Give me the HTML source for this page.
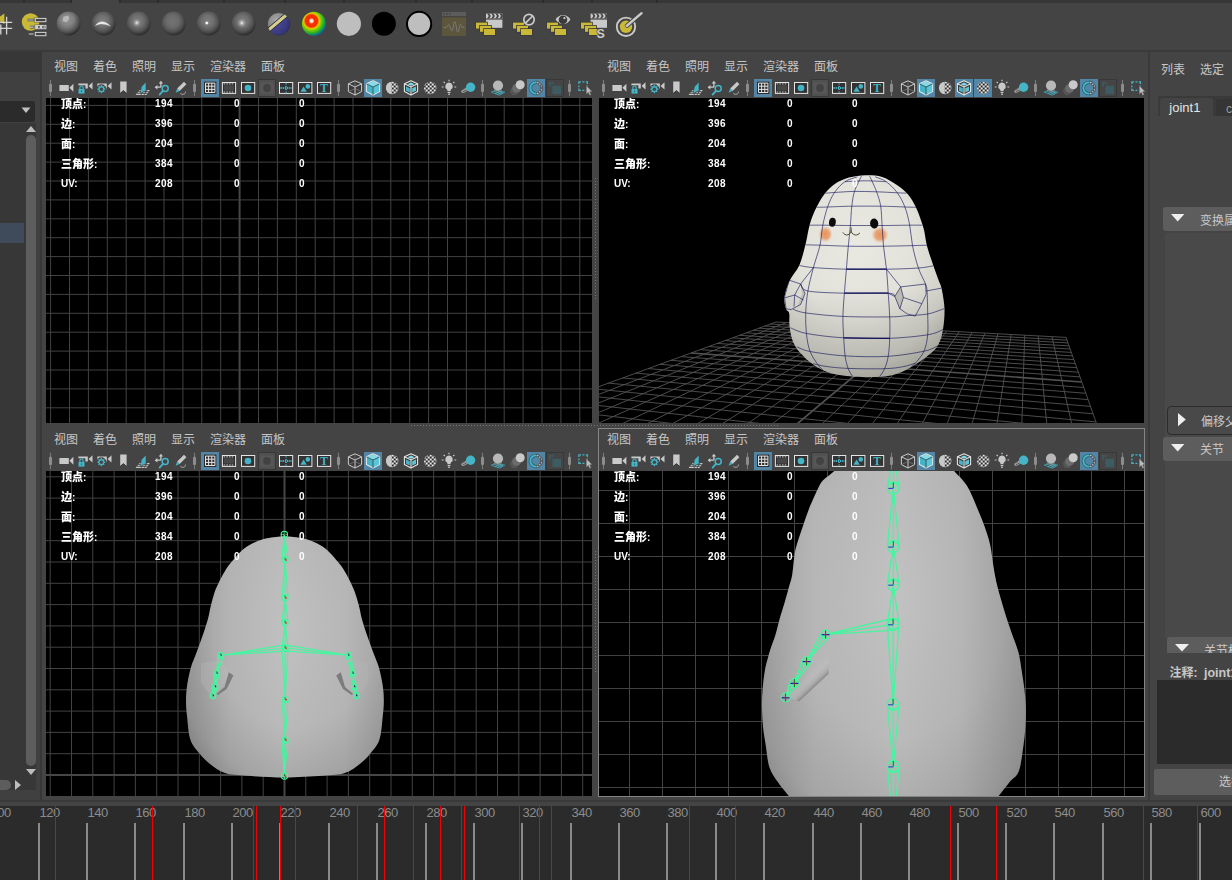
<!DOCTYPE html>
<html lang="zh"><head><meta charset="utf-8"><title>Maya</title>
<style>
*{box-sizing:border-box;margin:0;padding:0}
html,body{width:1232px;height:880px;overflow:hidden;background:#444444}
body{position:relative;font-family:"Liberation Sans","Noto Sans CJK SC",sans-serif;font-size:12px;color:#c8c8c8}
.a{position:absolute}
.menu{position:absolute;height:16px;line-height:16px;font-size:12px;color:#c6c6c6;white-space:nowrap}
.menu span{position:absolute;top:0}
.vp{position:absolute;background:#000;overflow:hidden}
svg text{white-space:pre}
.hud b{font-size:11px}
.hud{position:absolute;will-change:transform;font-weight:bold;font-size:10px;color:#fff;line-height:14px;white-space:nowrap;font-family:"Liberation Sans","Noto Sans CJK SC",sans-serif}
svg{position:absolute;overflow:visible}
</style></head><body>
<div class="a" style="left:0px;top:0px;width:1232px;height:3px;background:#373737;"></div><div class="a" style="left:72px;top:0px;width:48px;height:3px;background:#444444;"></div><div class="a" style="left:23px;top:0px;width:2px;height:3px;background:#2c2c2c;"></div><div class="a" style="left:70px;top:0px;width:2px;height:3px;background:#2c2c2c;"></div><div class="a" style="left:119px;top:0px;width:2px;height:3px;background:#2c2c2c;"></div><div class="a" style="left:157px;top:0px;width:2px;height:3px;background:#2c2c2c;"></div><div class="a" style="left:223px;top:0px;width:2px;height:3px;background:#2c2c2c;"></div><div class="a" style="left:284px;top:0px;width:2px;height:3px;background:#2c2c2c;"></div><div class="a" style="left:343px;top:0px;width:2px;height:3px;background:#2c2c2c;"></div><div class="a" style="left:415px;top:0px;width:2px;height:3px;background:#2c2c2c;"></div><div class="a" style="left:471px;top:0px;width:2px;height:3px;background:#2c2c2c;"></div><div class="a" style="left:542px;top:0px;width:2px;height:3px;background:#2c2c2c;"></div><div class="a" style="left:591px;top:0px;width:2px;height:3px;background:#2c2c2c;"></div><div class="a" style="left:656px;top:0px;width:2px;height:3px;background:#2c2c2c;"></div><div class="a" style="left:0px;top:50px;width:1232px;height:2px;background:#3a3a3a;"></div><svg style="left:0;top:0" width="700" height="50" viewBox="0 0 700 50"><defs>
<radialGradient id="sg" cx="0.45" cy="0.40" r="0.60"><stop offset="0" stop-color="#7e7e7e"/><stop offset="0.4" stop-color="#707070"/><stop offset="0.7" stop-color="#555555"/><stop offset="0.9" stop-color="#3a3a3a"/><stop offset="1" stop-color="#2a2a2a"/></radialGradient>
<radialGradient id="sg2" cx="0.45" cy="0.40" r="0.60"><stop offset="0" stop-color="#747474"/><stop offset="0.45" stop-color="#6a6a6a"/><stop offset="0.72" stop-color="#535353"/><stop offset="0.9" stop-color="#3a3a3a"/><stop offset="1" stop-color="#2a2a2a"/></radialGradient>
<radialGradient id="sg1" cx="0.42" cy="0.36" r="0.64"><stop offset="0" stop-color="#949494"/><stop offset="0.45" stop-color="#7c7c7c"/><stop offset="0.75" stop-color="#585858"/><stop offset="0.92" stop-color="#3a3a3a"/><stop offset="1" stop-color="#2a2a2a"/></radialGradient><radialGradient id="hl1" cx="0.5" cy="0.5" r="0.5"><stop offset="0" stop-color="#ffffff"/><stop offset="0.35" stop-color="#e0e0e0" stop-opacity="0.9"/><stop offset="1" stop-color="#808080" stop-opacity="0"/></radialGradient>
<radialGradient id="hl2" cx="0.5" cy="0.5" r="0.5"><stop offset="0" stop-color="#ffffff"/><stop offset="0.2" stop-color="#d8d8d8" stop-opacity="0.8"/><stop offset="1" stop-color="#808080" stop-opacity="0"/></radialGradient>
<radialGradient id="rb" cx="0.40" cy="0.38" r="0.70"><stop offset="0" stop-color="#ffffff"/><stop offset="0.10" stop-color="#ffd0c0"/><stop offset="0.18" stop-color="#ff2a00"/><stop offset="0.36" stop-color="#f03000"/><stop offset="0.46" stop-color="#e8c800"/><stop offset="0.56" stop-color="#7ed000"/><stop offset="0.75" stop-color="#20a830"/><stop offset="0.9" stop-color="#0868a0"/><stop offset="1" stop-color="#0838a8"/></radialGradient>
<radialGradient id="bl" cx="0.35" cy="0.3" r="0.8"><stop offset="0" stop-color="#5454a6"/><stop offset="0.6" stop-color="#38387c"/><stop offset="1" stop-color="#1c1c48"/></radialGradient>
<radialGradient id="gr" cx="0.4" cy="0.35" r="0.8"><stop offset="0" stop-color="#a8a8a8"/><stop offset="1" stop-color="#5a5a5a"/></radialGradient>
<clipPath id="c9"><circle cx="278.8" cy="24" r="11.4"/></clipPath>
</defs><path d="M4.4 13.6V24.2L-3.5 19z" fill="#c9b936"/><path d="M0.8 24.5V34.5M6.6 16.8V34.5M0 22.4H12.2M0 28.4H12.2" stroke="#d4d4d4" stroke-width="1.3" fill="none"/><circle cx="30.6" cy="22" r="8.8" fill="#c9b936"/><path d="M27.5 20H34M30 27.1H34M28.8 34H34" stroke="#444" stroke-width="2.6" fill="none"/><path d="M27.5 20H33.6M30 27.1H33.6M28.8 34H33.6" stroke="#d4d4d4" stroke-width="1.2" fill="none"/><rect x="34.4" y="17.6" width="12.4" height="4.9" fill="#444"/><rect x="35.3" y="18.4" width="10.6" height="3.3" fill="#444" stroke="#d4d4d4" stroke-width="1"/><rect x="34.4" y="24.6" width="12.4" height="4.9" fill="#444"/><rect x="35.3" y="25.4" width="10.6" height="3.3" fill="#444" stroke="#d4d4d4" stroke-width="1"/><rect x="34.4" y="31.6" width="12.4" height="4.9" fill="#444"/><rect x="35.3" y="32.4" width="10.6" height="3.3" fill="#444" stroke="#d4d4d4" stroke-width="1"/><rect x="36" y="25.6" width="2.2" height="2.8" fill="#d4d4d4"/><circle cx="41" cy="27" r="1.5" fill="#d4d4d4"/><rect x="43.4" y="25.6" width="2" height="2.8" fill="#9a9a9a"/><circle cx="68.6" cy="23.5" r="11.9" fill="url(#sg1)"/><circle cx="103.75" cy="23.5" r="11.9" fill="url(#sg)"/><circle cx="138.75" cy="23.5" r="11.9" fill="url(#sg)"/><circle cx="173.75" cy="23.5" r="11.9" fill="url(#sg2)"/><circle cx="208.75" cy="23.5" r="11.9" fill="url(#sg)"/><circle cx="243.75" cy="23.5" r="11.9" fill="url(#sg)"/><path d="M63.4 16.8L68.2 15.6L69.4 18.6L66.6 22.2L62.6 21.2z" fill="#d0d0d0" opacity="0.85"/><ellipse cx="67.5" cy="19.5" rx="8" ry="6" fill="#909090" opacity="0.25"/><path d="M95.5 25.5C99 20.5 105 20.5 110.2 26C105 23.4 99.4 23.2 95.5 25.5z" fill="#f0f0f0" stroke="#d0d0d0" stroke-width="0.5"/><circle cx="136.8" cy="22.8" r="4.6" fill="url(#hl2)"/><circle cx="206.8" cy="23" r="2.6" fill="url(#hl1)"/><circle cx="206.8" cy="23" r="1.1" fill="#fff"/><circle cx="241.8" cy="23" r="5.2" fill="url(#hl2)"/><g clip-path="url(#c9)"><rect x="266" y="11" width="26" height="26" fill="url(#gr)"/><path d="M262.8 37.4L294.1 11V42H260z" fill="url(#bl)"/><path d="M260.3 34.4L291.6 8L294.1 11L262.8 37.4z" fill="#d2ce8c" stroke="#20203a" stroke-width="0.9"/></g><circle cx="278.8" cy="24" r="11.4" fill="none" stroke="#2c2c34" stroke-width="0.8" opacity="0.7"/><circle cx="313.9" cy="23.8" r="12" fill="url(#rb)"/><circle cx="348.9" cy="23.8" r="12.1" fill="#bebebe"/><circle cx="383.9" cy="23.8" r="12" fill="#000"/><circle cx="419.1" cy="23.9" r="12.1" fill="#bebebe" stroke="#000" stroke-width="2"/><rect x="442" y="12" width="24" height="4" fill="#5c5c5c"/><path d="M443.4 14H451" stroke="#444" stroke-width="1.4" stroke-dasharray="1.6 1.2"/><rect x="442" y="17.4" width="24" height="18.6" fill="#5c573c"/><path d="M443.6 27.4H446.4C447.6 27.4 447.6 24.8 448.8 24.8S450.6 30.8 452 30.8 453.4 21.6 454.8 21.6 456.4 32 457.8 32 459.2 24.4 460.4 24.4 461.6 27.4 462.6 27.4H464.6" fill="none" stroke="#7a7a7a" stroke-width="1"/><rect x="486" y="19.6" width="16.4" height="8.2" fill="#c9c9c9"/><rect x="486" y="13.6" width="16.4" height="4.8" fill="#c9c9c9"/><path d="M487.2 13.6h2l1.6 2.4l-1.6 2.4h-2l1.6-2.4z" fill="#444"/><path d="M491.3 13.6h2l1.6 2.4l-1.6 2.4h-2l1.6-2.4z" fill="#444"/><path d="M495.4 13.6h2l1.6 2.4l-1.6 2.4h-2l1.6-2.4z" fill="#444"/><path d="M499.5 13.6h2l1.6 2.4l-1.6 2.4h-2l1.6-2.4z" fill="#444"/><rect x="475.2" y="21.8" width="12.6" height="7.6" fill="#3a3a3a"/><rect x="476" y="22.6" width="11" height="6" fill="#c9b936"/><rect x="479.2" y="25.0" width="12.6" height="7.6" fill="#3a3a3a"/><rect x="480" y="25.8" width="11" height="6" fill="#c9b936"/><rect x="483.2" y="28.2" width="12.6" height="7.6" fill="#3a3a3a"/><rect x="484" y="29.0" width="11" height="6" fill="#c9b936"/><rect x="512.2" y="21.8" width="12.6" height="7.6" fill="#3a3a3a"/><rect x="513" y="22.6" width="11" height="6" fill="#c9b936"/><rect x="516.2" y="25.0" width="12.6" height="7.6" fill="#3a3a3a"/><rect x="517" y="25.8" width="11" height="6" fill="#c9b936"/><rect x="520.2" y="28.2" width="12.6" height="7.6" fill="#3a3a3a"/><rect x="521" y="29.0" width="11" height="6" fill="#c9b936"/><circle cx="529" cy="19.6" r="5.2" fill="#444" stroke="#c9c9c9" stroke-width="1.7"/><path d="M525.4 23.2L532.6 16" stroke="#c9c9c9" stroke-width="1.7"/><path d="M555.6 19.6C559 13.6 567 13.6 570.4 19.6C567 25.6 559 25.6 555.6 19.6z" fill="#c9c9c9"/><circle cx="563" cy="19.8" r="4.3" fill="#3a3a3a"/><circle cx="564.4" cy="18.2" r="1.1" fill="#c9c9c9"/><rect x="546.2" y="21.8" width="12.6" height="7.6" fill="#3a3a3a"/><rect x="547" y="22.6" width="11" height="6" fill="#c9b936"/><rect x="550.2" y="25.0" width="12.6" height="7.6" fill="#3a3a3a"/><rect x="551" y="25.8" width="11" height="6" fill="#c9b936"/><rect x="554.2" y="28.2" width="12.6" height="7.6" fill="#3a3a3a"/><rect x="555" y="29.0" width="11" height="6" fill="#c9b936"/><rect x="590.6" y="19.6" width="16.4" height="8.2" fill="#c9c9c9"/><rect x="590.6" y="13.6" width="16.4" height="4.8" fill="#c9c9c9"/><path d="M591.8000000000001 13.6h2l1.6 2.4l-1.6 2.4h-2l1.6-2.4z" fill="#444"/><path d="M595.9000000000001 13.6h2l1.6 2.4l-1.6 2.4h-2l1.6-2.4z" fill="#444"/><path d="M600.0000000000001 13.6h2l1.6 2.4l-1.6 2.4h-2l1.6-2.4z" fill="#444"/><path d="M604.1 13.6h2l1.6 2.4l-1.6 2.4h-2l1.6-2.4z" fill="#444"/><rect x="580.2" y="21.8" width="12.6" height="7.6" fill="#3a3a3a"/><rect x="581" y="22.6" width="11" height="6" fill="#c9b936"/><rect x="584.2" y="25.0" width="12.6" height="7.6" fill="#3a3a3a"/><rect x="585" y="25.8" width="11" height="6" fill="#c9b936"/><rect x="588.2" y="28.2" width="12.6" height="7.6" fill="#3a3a3a"/><rect x="589" y="29.0" width="11" height="6" fill="#c9b936"/><text x="596.4" y="37.6" font-family="Liberation Sans,sans-serif" font-weight="bold" font-size="12.5" fill="#c9c9c9" stroke="#444" stroke-width="1.4" paint-order="stroke">S</text><circle cx="626" cy="26.8" r="9.2" fill="#444" stroke="#c9c9c9" stroke-width="1.9"/><circle cx="626" cy="26.8" r="6.2" fill="#c9b936"/><path d="M627 25.6L641.6 13.2" stroke="#444" stroke-width="4.4" stroke-linecap="round"/><path d="M626.6 26L641.6 13.2" stroke="#c9c9c9" stroke-width="2.4" stroke-linecap="round"/></svg><div class="a" style="left:0px;top:52px;width:42px;height:748px;background:#373737;"></div><div class="a" style="left:0px;top:72px;width:40px;height:728px;background:#404040;"></div><div class="a" style="left:0px;top:101px;width:35px;height:21px;background:#2b2b2b;border-radius:0 3px 3px 0"></div><svg style="left:21px;top:106.5px" width="10" height="7"><path d="M0.5 0.5h9L5 6z" fill="#c0c0c0"/></svg><div class="a" style="left:0px;top:123px;width:36px;height:667px;background:#373737;"></div><div class="a" style="left:0px;top:223px;width:24px;height:20px;background:#3f4b5b;"></div><svg style="left:26px;top:126px" width="10" height="6"><path d="M0 6L5 0L10 6z" fill="#bdbdbd"/></svg><div class="a" style="left:26px;top:135px;width:10px;height:631px;background:#5d5d5d;border-radius:5px"></div><svg style="left:26px;top:769px" width="10" height="6"><path d="M0 0L5 6L10 0z" fill="#bdbdbd"/></svg><div class="a" style="left:0px;top:780px;width:11px;height:10px;background:#5d5d5d;border-radius:0 5px 5px 0"></div><svg style="left:15px;top:780px" width="6" height="10"><path d="M0 0L6 5L0 10z" fill="#bdbdbd"/></svg><div class="menu" style="left:46px;top:59px"><span style="left:8px">视图</span><span style="left:47px">着色</span><span style="left:86px">照明</span><span style="left:125px">显示</span><span style="left:164px">渲染器</span><span style="left:215px">面板</span></div><svg style="left:42.0px;top:79px" width="18" height="18" viewBox="0 0 18 18"><rect x="8" y="0.8" width="1" height="16.4" fill="#7c7c7c"/><rect x="7" y="4.8" width="3" height="8.2" rx="1" fill="#8c8c8c"/></svg><svg style="left:56.5px;top:79px" width="18" height="18" viewBox="0 0 18 18"><rect x="2.4" y="6" width="9.4" height="6" fill="#c9c9c9"/><path d="M12.4 8.7L16.4 4.7V12.7z" fill="#c9c9c9"/></svg><svg style="left:75.5px;top:79px" width="18" height="18" viewBox="0 0 18 18"><rect x="2.4" y="4.5" width="9.4" height="5" fill="#c9c9c9"/><path d="M12.6 7L16.5 3.2V10.6z" fill="#c9c9c9"/><rect x="1.6" y="6.3" width="7.8" height="9" fill="#444"/><path d="M3.9 10.2V8.6a1.6 1.6 0 0 1 3.2 0V10.2" fill="none" stroke="#44b4c6" stroke-width="1.2"/><rect x="2.5" y="10" width="6" height="4.6" fill="#44b4c6"/><rect x="5" y="11.4" width="1" height="1.8" fill="#2a6a78"/></svg><svg style="left:94.5px;top:79px" width="18" height="18" viewBox="0 0 18 18"><rect x="2.4" y="4.5" width="9.4" height="5" fill="#c9c9c9"/><path d="M12.6 7L16.5 3.2V10.6z" fill="#c9c9c9"/><circle cx="6.4" cy="10.2" r="5" fill="#444"/><path d="M10.48 9.80L10.48 10.60L9.27 11.07L9.05 11.61L9.57 12.80L9.00 13.37L7.81 12.85L7.27 13.07L6.80 14.28L6.00 14.28L5.53 13.07L4.99 12.85L3.80 13.37L3.23 12.80L3.75 11.61L3.53 11.07L2.32 10.60L2.32 9.80L3.53 9.33L3.75 8.79L3.23 7.60L3.80 7.03L4.99 7.55L5.53 7.33L6.00 6.12L6.80 6.12L7.27 7.33L7.81 7.55L9.00 7.03L9.57 7.60L9.05 8.79L9.27 9.33z" fill="#44b4c6"/><circle cx="6.4" cy="10.2" r="1.7" fill="#444"/></svg><svg style="left:113.5px;top:79px" width="18" height="18" viewBox="0 0 18 18"><path d="M6.2 2.6H12.6V14L9.4 11.2L6.2 14z" fill="#c9c9c9"/><path d="M6.2 14.6L9.4 11.8L12.6 14.6" fill="none" stroke="#333" stroke-width="0.8"/></svg><svg style="left:132.5px;top:79px" width="18" height="18" viewBox="0 0 18 18"><path d="M2.6 15.9H13.4L16.8 11H6.6z" fill="#c9c9c9"/><path d="M5.2 12.6H15.6M4 14.3H14.4M8 15.9L11 11M11 15.9L14 11" stroke="#444" stroke-width="0.9" fill="none"/><path d="M8.4 7.8L13 3V11.6L7.2 14.4z" fill="#44b4c6" stroke="#444" stroke-width="0.6"/></svg><svg style="left:151.5px;top:79px" width="18" height="18" viewBox="0 0 18 18"><path d="M8.9 8.2V3.4M8.9 8.2H4.2" stroke="#c9c9c9" stroke-width="1.3" fill="none"/><path d="M6.7 4.6L8.9 1.8L11.1 4.6zM5.4 6L2.6 8.2L5.4 10.4z" fill="#c9c9c9"/><circle cx="13.2" cy="9.6" r="3" fill="none" stroke="#44b4c6" stroke-width="1.5"/><path d="M11 11.8L7.6 15.6" stroke="#44b4c6" stroke-width="1.8" stroke-linecap="round"/></svg><svg style="left:170.5px;top:79px" width="18" height="18" viewBox="0 0 18 18"><path d="M13 2.8L15.4 5.2L8.6 12L6.2 9.6z" fill="#c9c9c9"/><path d="M6.2 9.6L8.6 12L4.6 13.8z" fill="#44b4c6"/><path d="M9.4 14.4C11 16 14.6 15.6 14.4 12.6" fill="none" stroke="#b0b0b0" stroke-width="1"/></svg><svg style="left:185.5px;top:79px" width="18" height="18" viewBox="0 0 18 18"><rect x="8" y="0.8" width="1" height="16.4" fill="#7c7c7c"/><rect x="7" y="4.8" width="3" height="8.2" rx="1" fill="#8c8c8c"/></svg><div class="a" style="left:201.0px;top:79px;width:18px;height:18px;background:#5285a6"></div><svg style="left:201.0px;top:79px" width="18" height="18" viewBox="0 0 18 18"><rect x="3" y="2.6" width="12.4" height="12.4" fill="#2d2d2d"/><path d="M4.5 4.1H13.9V13.5H4.5zM7.6 4.1V13.5M10.8 4.1V13.5M4.5 7.2H13.9M4.5 10.4H13.9" fill="none" stroke="#e4e4e4" stroke-width="1"/></svg><svg style="left:220.0px;top:79px" width="18" height="18" viewBox="0 0 18 18"><rect x="2.4" y="3.5" width="13.2" height="10.9" fill="#2d2d2d" stroke="#e4e4e4" stroke-width="1"/><rect x="4" y="6.2" width="10" height="5.4" fill="#484848"/><path d="M3.6 4.9H14.4M3.6 13H14.4" stroke="#e4e4e4" stroke-width="0.9" stroke-dasharray="1.6 1.1"/></svg><svg style="left:239.0px;top:79px" width="18" height="18" viewBox="0 0 18 18"><rect x="2.5" y="3.5" width="13.2" height="10.9" fill="#333" stroke="#e4e4e4" stroke-width="1"/><circle cx="9" cy="9" r="3.3" fill="#44b4c6"/></svg><svg style="left:258.0px;top:79px" width="18" height="18" viewBox="0 0 18 18"><rect x="0.5" y="0.5" width="17" height="17" fill="#505050" stroke="#383838"/><rect x="2.5" y="3.5" width="13" height="11" fill="#575757"/><circle cx="9" cy="9" r="3.9" fill="#424242"/></svg><svg style="left:277.0px;top:79px" width="18" height="18" viewBox="0 0 18 18"><rect x="2.5" y="3.5" width="13.2" height="10.9" fill="#333" stroke="#e4e4e4" stroke-width="1"/><path d="M3.4 9H14.8" stroke="#44b4c6" stroke-width="1.8" stroke-dasharray="1.3 0.9"/><path d="M9.1 4.4V13.6" stroke="#44b4c6" stroke-width="1.6" stroke-dasharray="1.2 1.5"/></svg><svg style="left:296.0px;top:79px" width="18" height="18" viewBox="0 0 18 18"><rect x="2.5" y="3.5" width="13.4" height="10.9" fill="#333" stroke="#e4e4e4" stroke-width="1"/><path d="M4.4 12.8L7.6 7.6L10.8 12.8z" fill="#44b4c6"/><circle cx="11.8" cy="7.4" r="2.3" fill="#44b4c6"/></svg><svg style="left:315.0px;top:79px" width="18" height="18" viewBox="0 0 18 18"><rect x="2.5" y="3.5" width="13.2" height="10.9" fill="#333" stroke="#e4e4e4" stroke-width="1"/><text x="9.1" y="13.2" text-anchor="middle" font-family="Liberation Serif,serif" font-weight="bold" font-size="11.5" fill="#44b4c6">T</text></svg><svg style="left:329.5px;top:79px" width="18" height="18" viewBox="0 0 18 18"><rect x="8" y="0.8" width="1" height="16.4" fill="#7c7c7c"/><rect x="7" y="4.8" width="3" height="8.2" rx="1" fill="#8c8c8c"/></svg><svg style="left:345.5px;top:79px" width="18" height="18" viewBox="0 0 18 18"><path d="M9 1.8L15.6 4.8V12.6L9 16L2.4 12.6V4.8z" fill="#3a3a3a" stroke="#d4d4d4" stroke-width="0.95" stroke-linejoin="round"/><path d="M2.4 4.8L9 8L15.6 4.8M9 8V16" fill="none" stroke="#d4d4d4" stroke-width="0.95"/><path d="M9 1.8V9.6M9 9.6L2.4 12.6M9 9.6L15.6 12.6" fill="none" stroke="#8a8a8a" stroke-width="0.6"/></svg><div class="a" style="left:364.0px;top:79px;width:18px;height:18px;background:#5285a6"></div><svg style="left:364.0px;top:79px" width="18" height="18" viewBox="0 0 18 18"><path d="M9 1.8L15.6 4.8V12.6L9 16L2.4 12.6V4.8z" fill="#44b4c6" stroke="#e4e4e4" stroke-width="1.1" stroke-linejoin="round"/><path d="M9 2.4L15 5L9 7.8L3 5z" fill="#86dbe8"/><path d="M9.4 8.4L15.1 5.8V12.2L9.4 15.2z" fill="#5cc6d6"/><path d="M2.4 4.8L9 8L15.6 4.8M9 8V16" fill="none" stroke="#2d3c40" stroke-width="0.7"/></svg><svg style="left:383.0px;top:79px" width="18" height="18" viewBox="0 0 18 18"><clipPath id="ckA1"><circle cx="9.2" cy="9" r="6.2"/></clipPath><g clip-path="url(#ckA1)"><rect x="0" y="0" width="18" height="18" fill="#e8e8e8"/><path d="M0.70 0.50h2.0v2.0h-2.0zM0.70 4.50h2.0v2.0h-2.0zM0.70 8.50h2.0v2.0h-2.0zM0.70 12.50h2.0v2.0h-2.0zM0.70 16.50h2.0v2.0h-2.0zM0.70 20.50h2.0v2.0h-2.0zM0.70 24.50h2.0v2.0h-2.0zM2.70 2.50h2.0v2.0h-2.0zM2.70 6.50h2.0v2.0h-2.0zM2.70 10.50h2.0v2.0h-2.0zM2.70 14.50h2.0v2.0h-2.0zM2.70 18.50h2.0v2.0h-2.0zM2.70 22.50h2.0v2.0h-2.0zM2.70 26.50h2.0v2.0h-2.0zM4.70 0.50h2.0v2.0h-2.0zM4.70 4.50h2.0v2.0h-2.0zM4.70 8.50h2.0v2.0h-2.0zM4.70 12.50h2.0v2.0h-2.0zM4.70 16.50h2.0v2.0h-2.0zM4.70 20.50h2.0v2.0h-2.0zM4.70 24.50h2.0v2.0h-2.0zM6.70 2.50h2.0v2.0h-2.0zM6.70 6.50h2.0v2.0h-2.0zM6.70 10.50h2.0v2.0h-2.0zM6.70 14.50h2.0v2.0h-2.0zM6.70 18.50h2.0v2.0h-2.0zM6.70 22.50h2.0v2.0h-2.0zM6.70 26.50h2.0v2.0h-2.0zM8.70 0.50h2.0v2.0h-2.0zM8.70 4.50h2.0v2.0h-2.0zM8.70 8.50h2.0v2.0h-2.0zM8.70 12.50h2.0v2.0h-2.0zM8.70 16.50h2.0v2.0h-2.0zM8.70 20.50h2.0v2.0h-2.0zM8.70 24.50h2.0v2.0h-2.0zM10.70 2.50h2.0v2.0h-2.0zM10.70 6.50h2.0v2.0h-2.0zM10.70 10.50h2.0v2.0h-2.0zM10.70 14.50h2.0v2.0h-2.0zM10.70 18.50h2.0v2.0h-2.0zM10.70 22.50h2.0v2.0h-2.0zM10.70 26.50h2.0v2.0h-2.0zM12.70 0.50h2.0v2.0h-2.0zM12.70 4.50h2.0v2.0h-2.0zM12.70 8.50h2.0v2.0h-2.0zM12.70 12.50h2.0v2.0h-2.0zM12.70 16.50h2.0v2.0h-2.0zM12.70 20.50h2.0v2.0h-2.0zM12.70 24.50h2.0v2.0h-2.0zM14.70 2.50h2.0v2.0h-2.0zM14.70 6.50h2.0v2.0h-2.0zM14.70 10.50h2.0v2.0h-2.0zM14.70 14.50h2.0v2.0h-2.0zM14.70 18.50h2.0v2.0h-2.0zM14.70 22.50h2.0v2.0h-2.0zM14.70 26.50h2.0v2.0h-2.0zM16.70 0.50h2.0v2.0h-2.0zM16.70 4.50h2.0v2.0h-2.0zM16.70 8.50h2.0v2.0h-2.0zM16.70 12.50h2.0v2.0h-2.0zM16.70 16.50h2.0v2.0h-2.0zM16.70 20.50h2.0v2.0h-2.0zM16.70 24.50h2.0v2.0h-2.0zM18.70 2.50h2.0v2.0h-2.0zM18.70 6.50h2.0v2.0h-2.0zM18.70 10.50h2.0v2.0h-2.0zM18.70 14.50h2.0v2.0h-2.0zM18.70 18.50h2.0v2.0h-2.0zM18.70 22.50h2.0v2.0h-2.0zM18.70 26.50h2.0v2.0h-2.0zM20.70 0.50h2.0v2.0h-2.0zM20.70 4.50h2.0v2.0h-2.0zM20.70 8.50h2.0v2.0h-2.0zM20.70 12.50h2.0v2.0h-2.0zM20.70 16.50h2.0v2.0h-2.0zM20.70 20.50h2.0v2.0h-2.0zM20.70 24.50h2.0v2.0h-2.0zM22.70 2.50h2.0v2.0h-2.0zM22.70 6.50h2.0v2.0h-2.0zM22.70 10.50h2.0v2.0h-2.0zM22.70 14.50h2.0v2.0h-2.0zM22.70 18.50h2.0v2.0h-2.0zM22.70 22.50h2.0v2.0h-2.0zM22.70 26.50h2.0v2.0h-2.0zM24.70 0.50h2.0v2.0h-2.0zM24.70 4.50h2.0v2.0h-2.0zM24.70 8.50h2.0v2.0h-2.0zM24.70 12.50h2.0v2.0h-2.0zM24.70 16.50h2.0v2.0h-2.0zM24.70 20.50h2.0v2.0h-2.0zM24.70 24.50h2.0v2.0h-2.0zM26.70 2.50h2.0v2.0h-2.0zM26.70 6.50h2.0v2.0h-2.0zM26.70 10.50h2.0v2.0h-2.0zM26.70 14.50h2.0v2.0h-2.0zM26.70 18.50h2.0v2.0h-2.0zM26.70 22.50h2.0v2.0h-2.0zM26.70 26.50h2.0v2.0h-2.0z" fill="#2b2b2b"/><rect x="0" y="0" width="8.6" height="18" fill="#c9c9c9"/></g></svg><svg style="left:402.0px;top:79px" width="18" height="18" viewBox="0 0 18 18"><path d="M9 1.8L15.6 4.8V12.6L9 16L2.4 12.6V4.8z" fill="#3a3a3a" stroke="#e4e4e4" stroke-width="1.1" stroke-linejoin="round"/><path d="M2.4 4.8L9 8L15.6 4.8M9 8V16" fill="none" stroke="#e4e4e4" stroke-width="1.1"/><path d="M9 3.6L12.6 5.2L9 6.8L5.4 5.2z" fill="#7fd8e6"/><path d="M4 7.4L7.8 9.2V13.6L4 11.8z" fill="#44b4c6"/><path d="M14 7.4L10.2 9.2V13.6L14 11.8z" fill="#5cc6d6"/></svg><svg style="left:421.0px;top:79px" width="18" height="18" viewBox="0 0 18 18"><clipPath id="ckB2"><circle cx="9.2" cy="9" r="6.2"/></clipPath><g clip-path="url(#ckB2)"><rect x="0" y="0" width="18" height="18" fill="#e8e8e8"/><path d="M0.70 0.50h2.0v2.0h-2.0zM0.70 4.50h2.0v2.0h-2.0zM0.70 8.50h2.0v2.0h-2.0zM0.70 12.50h2.0v2.0h-2.0zM0.70 16.50h2.0v2.0h-2.0zM0.70 20.50h2.0v2.0h-2.0zM0.70 24.50h2.0v2.0h-2.0zM2.70 2.50h2.0v2.0h-2.0zM2.70 6.50h2.0v2.0h-2.0zM2.70 10.50h2.0v2.0h-2.0zM2.70 14.50h2.0v2.0h-2.0zM2.70 18.50h2.0v2.0h-2.0zM2.70 22.50h2.0v2.0h-2.0zM2.70 26.50h2.0v2.0h-2.0zM4.70 0.50h2.0v2.0h-2.0zM4.70 4.50h2.0v2.0h-2.0zM4.70 8.50h2.0v2.0h-2.0zM4.70 12.50h2.0v2.0h-2.0zM4.70 16.50h2.0v2.0h-2.0zM4.70 20.50h2.0v2.0h-2.0zM4.70 24.50h2.0v2.0h-2.0zM6.70 2.50h2.0v2.0h-2.0zM6.70 6.50h2.0v2.0h-2.0zM6.70 10.50h2.0v2.0h-2.0zM6.70 14.50h2.0v2.0h-2.0zM6.70 18.50h2.0v2.0h-2.0zM6.70 22.50h2.0v2.0h-2.0zM6.70 26.50h2.0v2.0h-2.0zM8.70 0.50h2.0v2.0h-2.0zM8.70 4.50h2.0v2.0h-2.0zM8.70 8.50h2.0v2.0h-2.0zM8.70 12.50h2.0v2.0h-2.0zM8.70 16.50h2.0v2.0h-2.0zM8.70 20.50h2.0v2.0h-2.0zM8.70 24.50h2.0v2.0h-2.0zM10.70 2.50h2.0v2.0h-2.0zM10.70 6.50h2.0v2.0h-2.0zM10.70 10.50h2.0v2.0h-2.0zM10.70 14.50h2.0v2.0h-2.0zM10.70 18.50h2.0v2.0h-2.0zM10.70 22.50h2.0v2.0h-2.0zM10.70 26.50h2.0v2.0h-2.0zM12.70 0.50h2.0v2.0h-2.0zM12.70 4.50h2.0v2.0h-2.0zM12.70 8.50h2.0v2.0h-2.0zM12.70 12.50h2.0v2.0h-2.0zM12.70 16.50h2.0v2.0h-2.0zM12.70 20.50h2.0v2.0h-2.0zM12.70 24.50h2.0v2.0h-2.0zM14.70 2.50h2.0v2.0h-2.0zM14.70 6.50h2.0v2.0h-2.0zM14.70 10.50h2.0v2.0h-2.0zM14.70 14.50h2.0v2.0h-2.0zM14.70 18.50h2.0v2.0h-2.0zM14.70 22.50h2.0v2.0h-2.0zM14.70 26.50h2.0v2.0h-2.0zM16.70 0.50h2.0v2.0h-2.0zM16.70 4.50h2.0v2.0h-2.0zM16.70 8.50h2.0v2.0h-2.0zM16.70 12.50h2.0v2.0h-2.0zM16.70 16.50h2.0v2.0h-2.0zM16.70 20.50h2.0v2.0h-2.0zM16.70 24.50h2.0v2.0h-2.0zM18.70 2.50h2.0v2.0h-2.0zM18.70 6.50h2.0v2.0h-2.0zM18.70 10.50h2.0v2.0h-2.0zM18.70 14.50h2.0v2.0h-2.0zM18.70 18.50h2.0v2.0h-2.0zM18.70 22.50h2.0v2.0h-2.0zM18.70 26.50h2.0v2.0h-2.0zM20.70 0.50h2.0v2.0h-2.0zM20.70 4.50h2.0v2.0h-2.0zM20.70 8.50h2.0v2.0h-2.0zM20.70 12.50h2.0v2.0h-2.0zM20.70 16.50h2.0v2.0h-2.0zM20.70 20.50h2.0v2.0h-2.0zM20.70 24.50h2.0v2.0h-2.0zM22.70 2.50h2.0v2.0h-2.0zM22.70 6.50h2.0v2.0h-2.0zM22.70 10.50h2.0v2.0h-2.0zM22.70 14.50h2.0v2.0h-2.0zM22.70 18.50h2.0v2.0h-2.0zM22.70 22.50h2.0v2.0h-2.0zM22.70 26.50h2.0v2.0h-2.0zM24.70 0.50h2.0v2.0h-2.0zM24.70 4.50h2.0v2.0h-2.0zM24.70 8.50h2.0v2.0h-2.0zM24.70 12.50h2.0v2.0h-2.0zM24.70 16.50h2.0v2.0h-2.0zM24.70 20.50h2.0v2.0h-2.0zM24.70 24.50h2.0v2.0h-2.0zM26.70 2.50h2.0v2.0h-2.0zM26.70 6.50h2.0v2.0h-2.0zM26.70 10.50h2.0v2.0h-2.0zM26.70 14.50h2.0v2.0h-2.0zM26.70 18.50h2.0v2.0h-2.0zM26.70 22.50h2.0v2.0h-2.0zM26.70 26.50h2.0v2.0h-2.0z" fill="#2b2b2b"/></g></svg><svg style="left:440.0px;top:79px" width="18" height="18" viewBox="0 0 18 18"><path d="M9 3.6a3.7 3.7 0 0 1 2.2 6.7c-.5.5-.7 1-.7 1.8H7.5c0-.8-.2-1.3-.7-1.8A3.7 3.7 0 0 1 9 3.6z" fill="#c9c9c9"/><rect x="7.6" y="12.8" width="2.8" height="1.2" fill="#c9c9c9"/><rect x="8" y="14.6" width="2" height="1.2" fill="#c9c9c9"/><path d="M9 0.8V2.2M3.6 2.8L4.8 4M14.4 2.8L13.2 4M1.8 8H3.6M14.4 8H16.2" stroke="#c9c9c9" stroke-width="1.2" fill="none"/></svg><svg style="left:459.0px;top:79px" width="18" height="18" viewBox="0 0 18 18"><ellipse cx="5.6" cy="11.4" rx="3.6" ry="1.9" transform="rotate(-28 5.6 11.4)" fill="#9a9a9a"/><path d="M3 11L6 9.4M4 12.8L7.6 11" stroke="#444" stroke-width="0.7"/><circle cx="11.6" cy="8.3" r="4.7" fill="#44b4c6"/></svg><svg style="left:473.5px;top:79px" width="18" height="18" viewBox="0 0 18 18"><rect x="8" y="0.8" width="1" height="16.4" fill="#7c7c7c"/><rect x="7" y="4.8" width="3" height="8.2" rx="1" fill="#8c8c8c"/></svg><svg style="left:489.0px;top:79px" width="18" height="18" viewBox="0 0 18 18"><path d="M2.2 13.2L7 11L15.8 13.2L10.4 16.2z" fill="none" stroke="#44b4c6" stroke-width="0.7"/><path d="M4.4 12.2L12.6 15M6 14.8L12 12.2M8.4 15.6L14 12.8M7 11.2L13.8 14" stroke="#44b4c6" stroke-width="0.7"/><circle cx="9" cy="6.6" r="5.1" fill="#b8b8b8"/><path d="M6 10.6V12.6M8 11.4V13.4M10 11.4V13.4M12 10.6V12.4" stroke="#8a8a8a" stroke-width="1"/></svg><svg style="left:508.0px;top:79px" width="18" height="18" viewBox="0 0 18 18"><circle cx="6.2" cy="12" r="4.2" fill="#555"/><circle cx="8.6" cy="9.4" r="4.4" fill="#6c6c6c"/><circle cx="12.2" cy="5.8" r="4.5" fill="#c9c9c9"/></svg><div class="a" style="left:527.0px;top:79px;width:18px;height:18px;background:#5285a6"></div><svg style="left:527.0px;top:79px" width="18" height="18" viewBox="0 0 18 18"><path d="M10.4 3.6A5.6 5.6 0 1 0 10.4 14.4" fill="none" stroke="#2a5f6e" stroke-width="3.4"/><path d="M10.4 3.6A5.6 5.6 0 1 0 10.4 14.4" fill="none" stroke="#44b4c6" stroke-width="1.9"/><path d="M9.8 2.4h2v2h-2zM11.8 4.2h2v2h-2zM13.4 6.2h2v2h-2zM13.4 9.8h2v2h-2zM11.8 11.8h2v2h-2zM9.8 13.6h2v2h-2zM13.8 8h1.8v1.8h-1.8z" fill="#f0f0f0" stroke="#2d2d2d" stroke-width="0.6"/></svg><svg style="left:546.0px;top:79px" width="18" height="18" viewBox="0 0 18 18"><rect x="0.5" y="0.5" width="17" height="17" fill="#454545" stroke="#383838"/><path d="M3 3h2v2H3zM5.4 3h2v2h-2zM3 5.4h2v2H3z" fill="#3c5a60"/><rect x="6.4" y="6.8" width="8.6" height="8.4" fill="#3d5c62"/></svg><svg style="left:560.5px;top:79px" width="18" height="18" viewBox="0 0 18 18"><rect x="8" y="0.8" width="1" height="16.4" fill="#7c7c7c"/><rect x="7" y="4.8" width="3" height="8.2" rx="1" fill="#8c8c8c"/></svg><svg style="left:576.0px;top:79px" width="18" height="18" viewBox="0 0 18 18"><path d="M2.9 5V2.9H5M6.4 2.9H8.4M9.8 2.9H11.4V5M11.4 6.4V7.6M2.9 6.4V8.2M2.9 9.6V11.4H5M6.4 11.4H8.4" fill="none" stroke="#44b4c6" stroke-width="1.3"/><path d="M10.2 6.6V15.4L12.2 13.4L13.6 16.4L15.2 15.6L13.8 12.8H16.4z" fill="#bdbdbd" stroke="#444" stroke-width="0.5"/></svg><div class="menu" style="left:599px;top:59px"><span style="left:8px">视图</span><span style="left:47px">着色</span><span style="left:86px">照明</span><span style="left:125px">显示</span><span style="left:164px">渲染器</span><span style="left:215px">面板</span></div><svg style="left:595.0px;top:79px" width="18" height="18" viewBox="0 0 18 18"><rect x="8" y="0.8" width="1" height="16.4" fill="#7c7c7c"/><rect x="7" y="4.8" width="3" height="8.2" rx="1" fill="#8c8c8c"/></svg><svg style="left:609.5px;top:79px" width="18" height="18" viewBox="0 0 18 18"><rect x="2.4" y="6" width="9.4" height="6" fill="#c9c9c9"/><path d="M12.4 8.7L16.4 4.7V12.7z" fill="#c9c9c9"/></svg><svg style="left:628.5px;top:79px" width="18" height="18" viewBox="0 0 18 18"><rect x="2.4" y="4.5" width="9.4" height="5" fill="#c9c9c9"/><path d="M12.6 7L16.5 3.2V10.6z" fill="#c9c9c9"/><rect x="1.6" y="6.3" width="7.8" height="9" fill="#444"/><path d="M3.9 10.2V8.6a1.6 1.6 0 0 1 3.2 0V10.2" fill="none" stroke="#44b4c6" stroke-width="1.2"/><rect x="2.5" y="10" width="6" height="4.6" fill="#44b4c6"/><rect x="5" y="11.4" width="1" height="1.8" fill="#2a6a78"/></svg><svg style="left:647.5px;top:79px" width="18" height="18" viewBox="0 0 18 18"><rect x="2.4" y="4.5" width="9.4" height="5" fill="#c9c9c9"/><path d="M12.6 7L16.5 3.2V10.6z" fill="#c9c9c9"/><circle cx="6.4" cy="10.2" r="5" fill="#444"/><path d="M10.48 9.80L10.48 10.60L9.27 11.07L9.05 11.61L9.57 12.80L9.00 13.37L7.81 12.85L7.27 13.07L6.80 14.28L6.00 14.28L5.53 13.07L4.99 12.85L3.80 13.37L3.23 12.80L3.75 11.61L3.53 11.07L2.32 10.60L2.32 9.80L3.53 9.33L3.75 8.79L3.23 7.60L3.80 7.03L4.99 7.55L5.53 7.33L6.00 6.12L6.80 6.12L7.27 7.33L7.81 7.55L9.00 7.03L9.57 7.60L9.05 8.79L9.27 9.33z" fill="#44b4c6"/><circle cx="6.4" cy="10.2" r="1.7" fill="#444"/></svg><svg style="left:666.5px;top:79px" width="18" height="18" viewBox="0 0 18 18"><path d="M6.2 2.6H12.6V14L9.4 11.2L6.2 14z" fill="#c9c9c9"/><path d="M6.2 14.6L9.4 11.8L12.6 14.6" fill="none" stroke="#333" stroke-width="0.8"/></svg><svg style="left:685.5px;top:79px" width="18" height="18" viewBox="0 0 18 18"><path d="M2.6 15.9H13.4L16.8 11H6.6z" fill="#c9c9c9"/><path d="M5.2 12.6H15.6M4 14.3H14.4M8 15.9L11 11M11 15.9L14 11" stroke="#444" stroke-width="0.9" fill="none"/><path d="M8.4 7.8L13 3V11.6L7.2 14.4z" fill="#44b4c6" stroke="#444" stroke-width="0.6"/></svg><svg style="left:704.5px;top:79px" width="18" height="18" viewBox="0 0 18 18"><path d="M8.9 8.2V3.4M8.9 8.2H4.2" stroke="#c9c9c9" stroke-width="1.3" fill="none"/><path d="M6.7 4.6L8.9 1.8L11.1 4.6zM5.4 6L2.6 8.2L5.4 10.4z" fill="#c9c9c9"/><circle cx="13.2" cy="9.6" r="3" fill="none" stroke="#44b4c6" stroke-width="1.5"/><path d="M11 11.8L7.6 15.6" stroke="#44b4c6" stroke-width="1.8" stroke-linecap="round"/></svg><svg style="left:723.5px;top:79px" width="18" height="18" viewBox="0 0 18 18"><path d="M13 2.8L15.4 5.2L8.6 12L6.2 9.6z" fill="#c9c9c9"/><path d="M6.2 9.6L8.6 12L4.6 13.8z" fill="#44b4c6"/><path d="M9.4 14.4C11 16 14.6 15.6 14.4 12.6" fill="none" stroke="#b0b0b0" stroke-width="1"/></svg><svg style="left:738.5px;top:79px" width="18" height="18" viewBox="0 0 18 18"><rect x="8" y="0.8" width="1" height="16.4" fill="#7c7c7c"/><rect x="7" y="4.8" width="3" height="8.2" rx="1" fill="#8c8c8c"/></svg><div class="a" style="left:754.0px;top:79px;width:18px;height:18px;background:#5285a6"></div><svg style="left:754.0px;top:79px" width="18" height="18" viewBox="0 0 18 18"><rect x="3" y="2.6" width="12.4" height="12.4" fill="#2d2d2d"/><path d="M4.5 4.1H13.9V13.5H4.5zM7.6 4.1V13.5M10.8 4.1V13.5M4.5 7.2H13.9M4.5 10.4H13.9" fill="none" stroke="#e4e4e4" stroke-width="1"/></svg><svg style="left:773.0px;top:79px" width="18" height="18" viewBox="0 0 18 18"><rect x="2.4" y="3.5" width="13.2" height="10.9" fill="#2d2d2d" stroke="#e4e4e4" stroke-width="1"/><rect x="4" y="6.2" width="10" height="5.4" fill="#484848"/><path d="M3.6 4.9H14.4M3.6 13H14.4" stroke="#e4e4e4" stroke-width="0.9" stroke-dasharray="1.6 1.1"/></svg><svg style="left:792.0px;top:79px" width="18" height="18" viewBox="0 0 18 18"><rect x="2.5" y="3.5" width="13.2" height="10.9" fill="#333" stroke="#e4e4e4" stroke-width="1"/><circle cx="9" cy="9" r="3.3" fill="#44b4c6"/></svg><svg style="left:811.0px;top:79px" width="18" height="18" viewBox="0 0 18 18"><rect x="0.5" y="0.5" width="17" height="17" fill="#505050" stroke="#383838"/><rect x="2.5" y="3.5" width="13" height="11" fill="#575757"/><circle cx="9" cy="9" r="3.9" fill="#424242"/></svg><svg style="left:830.0px;top:79px" width="18" height="18" viewBox="0 0 18 18"><rect x="2.5" y="3.5" width="13.2" height="10.9" fill="#333" stroke="#e4e4e4" stroke-width="1"/><path d="M3.4 9H14.8" stroke="#44b4c6" stroke-width="1.8" stroke-dasharray="1.3 0.9"/><path d="M9.1 4.4V13.6" stroke="#44b4c6" stroke-width="1.6" stroke-dasharray="1.2 1.5"/></svg><svg style="left:849.0px;top:79px" width="18" height="18" viewBox="0 0 18 18"><rect x="2.5" y="3.5" width="13.4" height="10.9" fill="#333" stroke="#e4e4e4" stroke-width="1"/><path d="M4.4 12.8L7.6 7.6L10.8 12.8z" fill="#44b4c6"/><circle cx="11.8" cy="7.4" r="2.3" fill="#44b4c6"/></svg><svg style="left:868.0px;top:79px" width="18" height="18" viewBox="0 0 18 18"><rect x="2.5" y="3.5" width="13.2" height="10.9" fill="#333" stroke="#e4e4e4" stroke-width="1"/><text x="9.1" y="13.2" text-anchor="middle" font-family="Liberation Serif,serif" font-weight="bold" font-size="11.5" fill="#44b4c6">T</text></svg><svg style="left:882.5px;top:79px" width="18" height="18" viewBox="0 0 18 18"><rect x="8" y="0.8" width="1" height="16.4" fill="#7c7c7c"/><rect x="7" y="4.8" width="3" height="8.2" rx="1" fill="#8c8c8c"/></svg><svg style="left:898.5px;top:79px" width="18" height="18" viewBox="0 0 18 18"><path d="M9 1.8L15.6 4.8V12.6L9 16L2.4 12.6V4.8z" fill="#3a3a3a" stroke="#d4d4d4" stroke-width="0.95" stroke-linejoin="round"/><path d="M2.4 4.8L9 8L15.6 4.8M9 8V16" fill="none" stroke="#d4d4d4" stroke-width="0.95"/><path d="M9 1.8V9.6M9 9.6L2.4 12.6M9 9.6L15.6 12.6" fill="none" stroke="#8a8a8a" stroke-width="0.6"/></svg><div class="a" style="left:917.0px;top:79px;width:18px;height:18px;background:#5285a6"></div><svg style="left:917.0px;top:79px" width="18" height="18" viewBox="0 0 18 18"><path d="M9 1.8L15.6 4.8V12.6L9 16L2.4 12.6V4.8z" fill="#44b4c6" stroke="#e4e4e4" stroke-width="1.1" stroke-linejoin="round"/><path d="M9 2.4L15 5L9 7.8L3 5z" fill="#86dbe8"/><path d="M9.4 8.4L15.1 5.8V12.2L9.4 15.2z" fill="#5cc6d6"/><path d="M2.4 4.8L9 8L15.6 4.8M9 8V16" fill="none" stroke="#2d3c40" stroke-width="0.7"/></svg><svg style="left:936.0px;top:79px" width="18" height="18" viewBox="0 0 18 18"><clipPath id="ckA3"><circle cx="9.2" cy="9" r="6.2"/></clipPath><g clip-path="url(#ckA3)"><rect x="0" y="0" width="18" height="18" fill="#e8e8e8"/><path d="M0.70 0.50h2.0v2.0h-2.0zM0.70 4.50h2.0v2.0h-2.0zM0.70 8.50h2.0v2.0h-2.0zM0.70 12.50h2.0v2.0h-2.0zM0.70 16.50h2.0v2.0h-2.0zM0.70 20.50h2.0v2.0h-2.0zM0.70 24.50h2.0v2.0h-2.0zM2.70 2.50h2.0v2.0h-2.0zM2.70 6.50h2.0v2.0h-2.0zM2.70 10.50h2.0v2.0h-2.0zM2.70 14.50h2.0v2.0h-2.0zM2.70 18.50h2.0v2.0h-2.0zM2.70 22.50h2.0v2.0h-2.0zM2.70 26.50h2.0v2.0h-2.0zM4.70 0.50h2.0v2.0h-2.0zM4.70 4.50h2.0v2.0h-2.0zM4.70 8.50h2.0v2.0h-2.0zM4.70 12.50h2.0v2.0h-2.0zM4.70 16.50h2.0v2.0h-2.0zM4.70 20.50h2.0v2.0h-2.0zM4.70 24.50h2.0v2.0h-2.0zM6.70 2.50h2.0v2.0h-2.0zM6.70 6.50h2.0v2.0h-2.0zM6.70 10.50h2.0v2.0h-2.0zM6.70 14.50h2.0v2.0h-2.0zM6.70 18.50h2.0v2.0h-2.0zM6.70 22.50h2.0v2.0h-2.0zM6.70 26.50h2.0v2.0h-2.0zM8.70 0.50h2.0v2.0h-2.0zM8.70 4.50h2.0v2.0h-2.0zM8.70 8.50h2.0v2.0h-2.0zM8.70 12.50h2.0v2.0h-2.0zM8.70 16.50h2.0v2.0h-2.0zM8.70 20.50h2.0v2.0h-2.0zM8.70 24.50h2.0v2.0h-2.0zM10.70 2.50h2.0v2.0h-2.0zM10.70 6.50h2.0v2.0h-2.0zM10.70 10.50h2.0v2.0h-2.0zM10.70 14.50h2.0v2.0h-2.0zM10.70 18.50h2.0v2.0h-2.0zM10.70 22.50h2.0v2.0h-2.0zM10.70 26.50h2.0v2.0h-2.0zM12.70 0.50h2.0v2.0h-2.0zM12.70 4.50h2.0v2.0h-2.0zM12.70 8.50h2.0v2.0h-2.0zM12.70 12.50h2.0v2.0h-2.0zM12.70 16.50h2.0v2.0h-2.0zM12.70 20.50h2.0v2.0h-2.0zM12.70 24.50h2.0v2.0h-2.0zM14.70 2.50h2.0v2.0h-2.0zM14.70 6.50h2.0v2.0h-2.0zM14.70 10.50h2.0v2.0h-2.0zM14.70 14.50h2.0v2.0h-2.0zM14.70 18.50h2.0v2.0h-2.0zM14.70 22.50h2.0v2.0h-2.0zM14.70 26.50h2.0v2.0h-2.0zM16.70 0.50h2.0v2.0h-2.0zM16.70 4.50h2.0v2.0h-2.0zM16.70 8.50h2.0v2.0h-2.0zM16.70 12.50h2.0v2.0h-2.0zM16.70 16.50h2.0v2.0h-2.0zM16.70 20.50h2.0v2.0h-2.0zM16.70 24.50h2.0v2.0h-2.0zM18.70 2.50h2.0v2.0h-2.0zM18.70 6.50h2.0v2.0h-2.0zM18.70 10.50h2.0v2.0h-2.0zM18.70 14.50h2.0v2.0h-2.0zM18.70 18.50h2.0v2.0h-2.0zM18.70 22.50h2.0v2.0h-2.0zM18.70 26.50h2.0v2.0h-2.0zM20.70 0.50h2.0v2.0h-2.0zM20.70 4.50h2.0v2.0h-2.0zM20.70 8.50h2.0v2.0h-2.0zM20.70 12.50h2.0v2.0h-2.0zM20.70 16.50h2.0v2.0h-2.0zM20.70 20.50h2.0v2.0h-2.0zM20.70 24.50h2.0v2.0h-2.0zM22.70 2.50h2.0v2.0h-2.0zM22.70 6.50h2.0v2.0h-2.0zM22.70 10.50h2.0v2.0h-2.0zM22.70 14.50h2.0v2.0h-2.0zM22.70 18.50h2.0v2.0h-2.0zM22.70 22.50h2.0v2.0h-2.0zM22.70 26.50h2.0v2.0h-2.0zM24.70 0.50h2.0v2.0h-2.0zM24.70 4.50h2.0v2.0h-2.0zM24.70 8.50h2.0v2.0h-2.0zM24.70 12.50h2.0v2.0h-2.0zM24.70 16.50h2.0v2.0h-2.0zM24.70 20.50h2.0v2.0h-2.0zM24.70 24.50h2.0v2.0h-2.0zM26.70 2.50h2.0v2.0h-2.0zM26.70 6.50h2.0v2.0h-2.0zM26.70 10.50h2.0v2.0h-2.0zM26.70 14.50h2.0v2.0h-2.0zM26.70 18.50h2.0v2.0h-2.0zM26.70 22.50h2.0v2.0h-2.0zM26.70 26.50h2.0v2.0h-2.0z" fill="#2b2b2b"/><rect x="0" y="0" width="8.6" height="18" fill="#c9c9c9"/></g></svg><div class="a" style="left:955.0px;top:79px;width:18px;height:18px;background:#5285a6"></div><svg style="left:955.0px;top:79px" width="18" height="18" viewBox="0 0 18 18"><path d="M9 1.8L15.6 4.8V12.6L9 16L2.4 12.6V4.8z" fill="#3a3a3a" stroke="#e4e4e4" stroke-width="1.1" stroke-linejoin="round"/><path d="M2.4 4.8L9 8L15.6 4.8M9 8V16" fill="none" stroke="#e4e4e4" stroke-width="1.1"/><path d="M9 3.6L12.6 5.2L9 6.8L5.4 5.2z" fill="#7fd8e6"/><path d="M4 7.4L7.8 9.2V13.6L4 11.8z" fill="#44b4c6"/><path d="M14 7.4L10.2 9.2V13.6L14 11.8z" fill="#5cc6d6"/></svg><div class="a" style="left:974.0px;top:79px;width:18px;height:18px;background:#5285a6"></div><svg style="left:974.0px;top:79px" width="18" height="18" viewBox="0 0 18 18"><clipPath id="ckB4"><circle cx="9.2" cy="9" r="6.2"/></clipPath><g clip-path="url(#ckB4)"><rect x="0" y="0" width="18" height="18" fill="#e8e8e8"/><path d="M0.70 0.50h2.0v2.0h-2.0zM0.70 4.50h2.0v2.0h-2.0zM0.70 8.50h2.0v2.0h-2.0zM0.70 12.50h2.0v2.0h-2.0zM0.70 16.50h2.0v2.0h-2.0zM0.70 20.50h2.0v2.0h-2.0zM0.70 24.50h2.0v2.0h-2.0zM2.70 2.50h2.0v2.0h-2.0zM2.70 6.50h2.0v2.0h-2.0zM2.70 10.50h2.0v2.0h-2.0zM2.70 14.50h2.0v2.0h-2.0zM2.70 18.50h2.0v2.0h-2.0zM2.70 22.50h2.0v2.0h-2.0zM2.70 26.50h2.0v2.0h-2.0zM4.70 0.50h2.0v2.0h-2.0zM4.70 4.50h2.0v2.0h-2.0zM4.70 8.50h2.0v2.0h-2.0zM4.70 12.50h2.0v2.0h-2.0zM4.70 16.50h2.0v2.0h-2.0zM4.70 20.50h2.0v2.0h-2.0zM4.70 24.50h2.0v2.0h-2.0zM6.70 2.50h2.0v2.0h-2.0zM6.70 6.50h2.0v2.0h-2.0zM6.70 10.50h2.0v2.0h-2.0zM6.70 14.50h2.0v2.0h-2.0zM6.70 18.50h2.0v2.0h-2.0zM6.70 22.50h2.0v2.0h-2.0zM6.70 26.50h2.0v2.0h-2.0zM8.70 0.50h2.0v2.0h-2.0zM8.70 4.50h2.0v2.0h-2.0zM8.70 8.50h2.0v2.0h-2.0zM8.70 12.50h2.0v2.0h-2.0zM8.70 16.50h2.0v2.0h-2.0zM8.70 20.50h2.0v2.0h-2.0zM8.70 24.50h2.0v2.0h-2.0zM10.70 2.50h2.0v2.0h-2.0zM10.70 6.50h2.0v2.0h-2.0zM10.70 10.50h2.0v2.0h-2.0zM10.70 14.50h2.0v2.0h-2.0zM10.70 18.50h2.0v2.0h-2.0zM10.70 22.50h2.0v2.0h-2.0zM10.70 26.50h2.0v2.0h-2.0zM12.70 0.50h2.0v2.0h-2.0zM12.70 4.50h2.0v2.0h-2.0zM12.70 8.50h2.0v2.0h-2.0zM12.70 12.50h2.0v2.0h-2.0zM12.70 16.50h2.0v2.0h-2.0zM12.70 20.50h2.0v2.0h-2.0zM12.70 24.50h2.0v2.0h-2.0zM14.70 2.50h2.0v2.0h-2.0zM14.70 6.50h2.0v2.0h-2.0zM14.70 10.50h2.0v2.0h-2.0zM14.70 14.50h2.0v2.0h-2.0zM14.70 18.50h2.0v2.0h-2.0zM14.70 22.50h2.0v2.0h-2.0zM14.70 26.50h2.0v2.0h-2.0zM16.70 0.50h2.0v2.0h-2.0zM16.70 4.50h2.0v2.0h-2.0zM16.70 8.50h2.0v2.0h-2.0zM16.70 12.50h2.0v2.0h-2.0zM16.70 16.50h2.0v2.0h-2.0zM16.70 20.50h2.0v2.0h-2.0zM16.70 24.50h2.0v2.0h-2.0zM18.70 2.50h2.0v2.0h-2.0zM18.70 6.50h2.0v2.0h-2.0zM18.70 10.50h2.0v2.0h-2.0zM18.70 14.50h2.0v2.0h-2.0zM18.70 18.50h2.0v2.0h-2.0zM18.70 22.50h2.0v2.0h-2.0zM18.70 26.50h2.0v2.0h-2.0zM20.70 0.50h2.0v2.0h-2.0zM20.70 4.50h2.0v2.0h-2.0zM20.70 8.50h2.0v2.0h-2.0zM20.70 12.50h2.0v2.0h-2.0zM20.70 16.50h2.0v2.0h-2.0zM20.70 20.50h2.0v2.0h-2.0zM20.70 24.50h2.0v2.0h-2.0zM22.70 2.50h2.0v2.0h-2.0zM22.70 6.50h2.0v2.0h-2.0zM22.70 10.50h2.0v2.0h-2.0zM22.70 14.50h2.0v2.0h-2.0zM22.70 18.50h2.0v2.0h-2.0zM22.70 22.50h2.0v2.0h-2.0zM22.70 26.50h2.0v2.0h-2.0zM24.70 0.50h2.0v2.0h-2.0zM24.70 4.50h2.0v2.0h-2.0zM24.70 8.50h2.0v2.0h-2.0zM24.70 12.50h2.0v2.0h-2.0zM24.70 16.50h2.0v2.0h-2.0zM24.70 20.50h2.0v2.0h-2.0zM24.70 24.50h2.0v2.0h-2.0zM26.70 2.50h2.0v2.0h-2.0zM26.70 6.50h2.0v2.0h-2.0zM26.70 10.50h2.0v2.0h-2.0zM26.70 14.50h2.0v2.0h-2.0zM26.70 18.50h2.0v2.0h-2.0zM26.70 22.50h2.0v2.0h-2.0zM26.70 26.50h2.0v2.0h-2.0z" fill="#2b2b2b"/></g></svg><svg style="left:993.0px;top:79px" width="18" height="18" viewBox="0 0 18 18"><path d="M9 3.6a3.7 3.7 0 0 1 2.2 6.7c-.5.5-.7 1-.7 1.8H7.5c0-.8-.2-1.3-.7-1.8A3.7 3.7 0 0 1 9 3.6z" fill="#c9c9c9"/><rect x="7.6" y="12.8" width="2.8" height="1.2" fill="#c9c9c9"/><rect x="8" y="14.6" width="2" height="1.2" fill="#c9c9c9"/><path d="M9 0.8V2.2M3.6 2.8L4.8 4M14.4 2.8L13.2 4M1.8 8H3.6M14.4 8H16.2" stroke="#c9c9c9" stroke-width="1.2" fill="none"/></svg><svg style="left:1012.0px;top:79px" width="18" height="18" viewBox="0 0 18 18"><ellipse cx="5.6" cy="11.4" rx="3.6" ry="1.9" transform="rotate(-28 5.6 11.4)" fill="#9a9a9a"/><path d="M3 11L6 9.4M4 12.8L7.6 11" stroke="#444" stroke-width="0.7"/><circle cx="11.6" cy="8.3" r="4.7" fill="#44b4c6"/></svg><svg style="left:1026.5px;top:79px" width="18" height="18" viewBox="0 0 18 18"><rect x="8" y="0.8" width="1" height="16.4" fill="#7c7c7c"/><rect x="7" y="4.8" width="3" height="8.2" rx="1" fill="#8c8c8c"/></svg><svg style="left:1042.0px;top:79px" width="18" height="18" viewBox="0 0 18 18"><path d="M2.2 13.2L7 11L15.8 13.2L10.4 16.2z" fill="none" stroke="#44b4c6" stroke-width="0.7"/><path d="M4.4 12.2L12.6 15M6 14.8L12 12.2M8.4 15.6L14 12.8M7 11.2L13.8 14" stroke="#44b4c6" stroke-width="0.7"/><circle cx="9" cy="6.6" r="5.1" fill="#b8b8b8"/><path d="M6 10.6V12.6M8 11.4V13.4M10 11.4V13.4M12 10.6V12.4" stroke="#8a8a8a" stroke-width="1"/></svg><svg style="left:1061.0px;top:79px" width="18" height="18" viewBox="0 0 18 18"><circle cx="6.2" cy="12" r="4.2" fill="#555"/><circle cx="8.6" cy="9.4" r="4.4" fill="#6c6c6c"/><circle cx="12.2" cy="5.8" r="4.5" fill="#c9c9c9"/></svg><div class="a" style="left:1080.0px;top:79px;width:18px;height:18px;background:#5285a6"></div><svg style="left:1080.0px;top:79px" width="18" height="18" viewBox="0 0 18 18"><path d="M10.4 3.6A5.6 5.6 0 1 0 10.4 14.4" fill="none" stroke="#2a5f6e" stroke-width="3.4"/><path d="M10.4 3.6A5.6 5.6 0 1 0 10.4 14.4" fill="none" stroke="#44b4c6" stroke-width="1.9"/><path d="M9.8 2.4h2v2h-2zM11.8 4.2h2v2h-2zM13.4 6.2h2v2h-2zM13.4 9.8h2v2h-2zM11.8 11.8h2v2h-2zM9.8 13.6h2v2h-2zM13.8 8h1.8v1.8h-1.8z" fill="#f0f0f0" stroke="#2d2d2d" stroke-width="0.6"/></svg><svg style="left:1099.0px;top:79px" width="18" height="18" viewBox="0 0 18 18"><rect x="0.5" y="0.5" width="17" height="17" fill="#454545" stroke="#383838"/><path d="M3 3h2v2H3zM5.4 3h2v2h-2zM3 5.4h2v2H3z" fill="#3c5a60"/><rect x="6.4" y="6.8" width="8.6" height="8.4" fill="#3d5c62"/></svg><svg style="left:1113.5px;top:79px" width="18" height="18" viewBox="0 0 18 18"><rect x="8" y="0.8" width="1" height="16.4" fill="#7c7c7c"/><rect x="7" y="4.8" width="3" height="8.2" rx="1" fill="#8c8c8c"/></svg><svg style="left:1129.0px;top:79px" width="18" height="18" viewBox="0 0 18 18"><path d="M2.9 5V2.9H5M6.4 2.9H8.4M9.8 2.9H11.4V5M11.4 6.4V7.6M2.9 6.4V8.2M2.9 9.6V11.4H5M6.4 11.4H8.4" fill="none" stroke="#44b4c6" stroke-width="1.3"/><path d="M10.2 6.6V15.4L12.2 13.4L13.6 16.4L15.2 15.6L13.8 12.8H16.4z" fill="#bdbdbd" stroke="#444" stroke-width="0.5"/></svg><div class="menu" style="left:46px;top:432px"><span style="left:8px">视图</span><span style="left:47px">着色</span><span style="left:86px">照明</span><span style="left:125px">显示</span><span style="left:164px">渲染器</span><span style="left:215px">面板</span></div><svg style="left:42.0px;top:452px" width="18" height="18" viewBox="0 0 18 18"><rect x="8" y="0.8" width="1" height="16.4" fill="#7c7c7c"/><rect x="7" y="4.8" width="3" height="8.2" rx="1" fill="#8c8c8c"/></svg><svg style="left:56.5px;top:452px" width="18" height="18" viewBox="0 0 18 18"><rect x="2.4" y="6" width="9.4" height="6" fill="#c9c9c9"/><path d="M12.4 8.7L16.4 4.7V12.7z" fill="#c9c9c9"/></svg><svg style="left:75.5px;top:452px" width="18" height="18" viewBox="0 0 18 18"><rect x="2.4" y="4.5" width="9.4" height="5" fill="#c9c9c9"/><path d="M12.6 7L16.5 3.2V10.6z" fill="#c9c9c9"/><rect x="1.6" y="6.3" width="7.8" height="9" fill="#444"/><path d="M3.9 10.2V8.6a1.6 1.6 0 0 1 3.2 0V10.2" fill="none" stroke="#44b4c6" stroke-width="1.2"/><rect x="2.5" y="10" width="6" height="4.6" fill="#44b4c6"/><rect x="5" y="11.4" width="1" height="1.8" fill="#2a6a78"/></svg><svg style="left:94.5px;top:452px" width="18" height="18" viewBox="0 0 18 18"><rect x="2.4" y="4.5" width="9.4" height="5" fill="#c9c9c9"/><path d="M12.6 7L16.5 3.2V10.6z" fill="#c9c9c9"/><circle cx="6.4" cy="10.2" r="5" fill="#444"/><path d="M10.48 9.80L10.48 10.60L9.27 11.07L9.05 11.61L9.57 12.80L9.00 13.37L7.81 12.85L7.27 13.07L6.80 14.28L6.00 14.28L5.53 13.07L4.99 12.85L3.80 13.37L3.23 12.80L3.75 11.61L3.53 11.07L2.32 10.60L2.32 9.80L3.53 9.33L3.75 8.79L3.23 7.60L3.80 7.03L4.99 7.55L5.53 7.33L6.00 6.12L6.80 6.12L7.27 7.33L7.81 7.55L9.00 7.03L9.57 7.60L9.05 8.79L9.27 9.33z" fill="#44b4c6"/><circle cx="6.4" cy="10.2" r="1.7" fill="#444"/></svg><svg style="left:113.5px;top:452px" width="18" height="18" viewBox="0 0 18 18"><path d="M6.2 2.6H12.6V14L9.4 11.2L6.2 14z" fill="#c9c9c9"/><path d="M6.2 14.6L9.4 11.8L12.6 14.6" fill="none" stroke="#333" stroke-width="0.8"/></svg><svg style="left:132.5px;top:452px" width="18" height="18" viewBox="0 0 18 18"><path d="M2.6 15.9H13.4L16.8 11H6.6z" fill="#c9c9c9"/><path d="M5.2 12.6H15.6M4 14.3H14.4M8 15.9L11 11M11 15.9L14 11" stroke="#444" stroke-width="0.9" fill="none"/><path d="M8.4 7.8L13 3V11.6L7.2 14.4z" fill="#44b4c6" stroke="#444" stroke-width="0.6"/></svg><svg style="left:151.5px;top:452px" width="18" height="18" viewBox="0 0 18 18"><path d="M8.9 8.2V3.4M8.9 8.2H4.2" stroke="#c9c9c9" stroke-width="1.3" fill="none"/><path d="M6.7 4.6L8.9 1.8L11.1 4.6zM5.4 6L2.6 8.2L5.4 10.4z" fill="#c9c9c9"/><circle cx="13.2" cy="9.6" r="3" fill="none" stroke="#44b4c6" stroke-width="1.5"/><path d="M11 11.8L7.6 15.6" stroke="#44b4c6" stroke-width="1.8" stroke-linecap="round"/></svg><svg style="left:170.5px;top:452px" width="18" height="18" viewBox="0 0 18 18"><path d="M13 2.8L15.4 5.2L8.6 12L6.2 9.6z" fill="#c9c9c9"/><path d="M6.2 9.6L8.6 12L4.6 13.8z" fill="#44b4c6"/><path d="M9.4 14.4C11 16 14.6 15.6 14.4 12.6" fill="none" stroke="#b0b0b0" stroke-width="1"/></svg><svg style="left:185.5px;top:452px" width="18" height="18" viewBox="0 0 18 18"><rect x="8" y="0.8" width="1" height="16.4" fill="#7c7c7c"/><rect x="7" y="4.8" width="3" height="8.2" rx="1" fill="#8c8c8c"/></svg><div class="a" style="left:201.0px;top:452px;width:18px;height:18px;background:#5285a6"></div><svg style="left:201.0px;top:452px" width="18" height="18" viewBox="0 0 18 18"><rect x="3" y="2.6" width="12.4" height="12.4" fill="#2d2d2d"/><path d="M4.5 4.1H13.9V13.5H4.5zM7.6 4.1V13.5M10.8 4.1V13.5M4.5 7.2H13.9M4.5 10.4H13.9" fill="none" stroke="#e4e4e4" stroke-width="1"/></svg><svg style="left:220.0px;top:452px" width="18" height="18" viewBox="0 0 18 18"><rect x="2.4" y="3.5" width="13.2" height="10.9" fill="#2d2d2d" stroke="#e4e4e4" stroke-width="1"/><rect x="4" y="6.2" width="10" height="5.4" fill="#484848"/><path d="M3.6 4.9H14.4M3.6 13H14.4" stroke="#e4e4e4" stroke-width="0.9" stroke-dasharray="1.6 1.1"/></svg><svg style="left:239.0px;top:452px" width="18" height="18" viewBox="0 0 18 18"><rect x="2.5" y="3.5" width="13.2" height="10.9" fill="#333" stroke="#e4e4e4" stroke-width="1"/><circle cx="9" cy="9" r="3.3" fill="#44b4c6"/></svg><svg style="left:258.0px;top:452px" width="18" height="18" viewBox="0 0 18 18"><rect x="0.5" y="0.5" width="17" height="17" fill="#505050" stroke="#383838"/><rect x="2.5" y="3.5" width="13" height="11" fill="#575757"/><circle cx="9" cy="9" r="3.9" fill="#424242"/></svg><svg style="left:277.0px;top:452px" width="18" height="18" viewBox="0 0 18 18"><rect x="2.5" y="3.5" width="13.2" height="10.9" fill="#333" stroke="#e4e4e4" stroke-width="1"/><path d="M3.4 9H14.8" stroke="#44b4c6" stroke-width="1.8" stroke-dasharray="1.3 0.9"/><path d="M9.1 4.4V13.6" stroke="#44b4c6" stroke-width="1.6" stroke-dasharray="1.2 1.5"/></svg><svg style="left:296.0px;top:452px" width="18" height="18" viewBox="0 0 18 18"><rect x="2.5" y="3.5" width="13.4" height="10.9" fill="#333" stroke="#e4e4e4" stroke-width="1"/><path d="M4.4 12.8L7.6 7.6L10.8 12.8z" fill="#44b4c6"/><circle cx="11.8" cy="7.4" r="2.3" fill="#44b4c6"/></svg><svg style="left:315.0px;top:452px" width="18" height="18" viewBox="0 0 18 18"><rect x="2.5" y="3.5" width="13.2" height="10.9" fill="#333" stroke="#e4e4e4" stroke-width="1"/><text x="9.1" y="13.2" text-anchor="middle" font-family="Liberation Serif,serif" font-weight="bold" font-size="11.5" fill="#44b4c6">T</text></svg><svg style="left:329.5px;top:452px" width="18" height="18" viewBox="0 0 18 18"><rect x="8" y="0.8" width="1" height="16.4" fill="#7c7c7c"/><rect x="7" y="4.8" width="3" height="8.2" rx="1" fill="#8c8c8c"/></svg><svg style="left:345.5px;top:452px" width="18" height="18" viewBox="0 0 18 18"><path d="M9 1.8L15.6 4.8V12.6L9 16L2.4 12.6V4.8z" fill="#3a3a3a" stroke="#d4d4d4" stroke-width="0.95" stroke-linejoin="round"/><path d="M2.4 4.8L9 8L15.6 4.8M9 8V16" fill="none" stroke="#d4d4d4" stroke-width="0.95"/><path d="M9 1.8V9.6M9 9.6L2.4 12.6M9 9.6L15.6 12.6" fill="none" stroke="#8a8a8a" stroke-width="0.6"/></svg><div class="a" style="left:364.0px;top:452px;width:18px;height:18px;background:#5285a6"></div><svg style="left:364.0px;top:452px" width="18" height="18" viewBox="0 0 18 18"><path d="M9 1.8L15.6 4.8V12.6L9 16L2.4 12.6V4.8z" fill="#44b4c6" stroke="#e4e4e4" stroke-width="1.1" stroke-linejoin="round"/><path d="M9 2.4L15 5L9 7.8L3 5z" fill="#86dbe8"/><path d="M9.4 8.4L15.1 5.8V12.2L9.4 15.2z" fill="#5cc6d6"/><path d="M2.4 4.8L9 8L15.6 4.8M9 8V16" fill="none" stroke="#2d3c40" stroke-width="0.7"/></svg><svg style="left:383.0px;top:452px" width="18" height="18" viewBox="0 0 18 18"><clipPath id="ckA5"><circle cx="9.2" cy="9" r="6.2"/></clipPath><g clip-path="url(#ckA5)"><rect x="0" y="0" width="18" height="18" fill="#e8e8e8"/><path d="M0.70 0.50h2.0v2.0h-2.0zM0.70 4.50h2.0v2.0h-2.0zM0.70 8.50h2.0v2.0h-2.0zM0.70 12.50h2.0v2.0h-2.0zM0.70 16.50h2.0v2.0h-2.0zM0.70 20.50h2.0v2.0h-2.0zM0.70 24.50h2.0v2.0h-2.0zM2.70 2.50h2.0v2.0h-2.0zM2.70 6.50h2.0v2.0h-2.0zM2.70 10.50h2.0v2.0h-2.0zM2.70 14.50h2.0v2.0h-2.0zM2.70 18.50h2.0v2.0h-2.0zM2.70 22.50h2.0v2.0h-2.0zM2.70 26.50h2.0v2.0h-2.0zM4.70 0.50h2.0v2.0h-2.0zM4.70 4.50h2.0v2.0h-2.0zM4.70 8.50h2.0v2.0h-2.0zM4.70 12.50h2.0v2.0h-2.0zM4.70 16.50h2.0v2.0h-2.0zM4.70 20.50h2.0v2.0h-2.0zM4.70 24.50h2.0v2.0h-2.0zM6.70 2.50h2.0v2.0h-2.0zM6.70 6.50h2.0v2.0h-2.0zM6.70 10.50h2.0v2.0h-2.0zM6.70 14.50h2.0v2.0h-2.0zM6.70 18.50h2.0v2.0h-2.0zM6.70 22.50h2.0v2.0h-2.0zM6.70 26.50h2.0v2.0h-2.0zM8.70 0.50h2.0v2.0h-2.0zM8.70 4.50h2.0v2.0h-2.0zM8.70 8.50h2.0v2.0h-2.0zM8.70 12.50h2.0v2.0h-2.0zM8.70 16.50h2.0v2.0h-2.0zM8.70 20.50h2.0v2.0h-2.0zM8.70 24.50h2.0v2.0h-2.0zM10.70 2.50h2.0v2.0h-2.0zM10.70 6.50h2.0v2.0h-2.0zM10.70 10.50h2.0v2.0h-2.0zM10.70 14.50h2.0v2.0h-2.0zM10.70 18.50h2.0v2.0h-2.0zM10.70 22.50h2.0v2.0h-2.0zM10.70 26.50h2.0v2.0h-2.0zM12.70 0.50h2.0v2.0h-2.0zM12.70 4.50h2.0v2.0h-2.0zM12.70 8.50h2.0v2.0h-2.0zM12.70 12.50h2.0v2.0h-2.0zM12.70 16.50h2.0v2.0h-2.0zM12.70 20.50h2.0v2.0h-2.0zM12.70 24.50h2.0v2.0h-2.0zM14.70 2.50h2.0v2.0h-2.0zM14.70 6.50h2.0v2.0h-2.0zM14.70 10.50h2.0v2.0h-2.0zM14.70 14.50h2.0v2.0h-2.0zM14.70 18.50h2.0v2.0h-2.0zM14.70 22.50h2.0v2.0h-2.0zM14.70 26.50h2.0v2.0h-2.0zM16.70 0.50h2.0v2.0h-2.0zM16.70 4.50h2.0v2.0h-2.0zM16.70 8.50h2.0v2.0h-2.0zM16.70 12.50h2.0v2.0h-2.0zM16.70 16.50h2.0v2.0h-2.0zM16.70 20.50h2.0v2.0h-2.0zM16.70 24.50h2.0v2.0h-2.0zM18.70 2.50h2.0v2.0h-2.0zM18.70 6.50h2.0v2.0h-2.0zM18.70 10.50h2.0v2.0h-2.0zM18.70 14.50h2.0v2.0h-2.0zM18.70 18.50h2.0v2.0h-2.0zM18.70 22.50h2.0v2.0h-2.0zM18.70 26.50h2.0v2.0h-2.0zM20.70 0.50h2.0v2.0h-2.0zM20.70 4.50h2.0v2.0h-2.0zM20.70 8.50h2.0v2.0h-2.0zM20.70 12.50h2.0v2.0h-2.0zM20.70 16.50h2.0v2.0h-2.0zM20.70 20.50h2.0v2.0h-2.0zM20.70 24.50h2.0v2.0h-2.0zM22.70 2.50h2.0v2.0h-2.0zM22.70 6.50h2.0v2.0h-2.0zM22.70 10.50h2.0v2.0h-2.0zM22.70 14.50h2.0v2.0h-2.0zM22.70 18.50h2.0v2.0h-2.0zM22.70 22.50h2.0v2.0h-2.0zM22.70 26.50h2.0v2.0h-2.0zM24.70 0.50h2.0v2.0h-2.0zM24.70 4.50h2.0v2.0h-2.0zM24.70 8.50h2.0v2.0h-2.0zM24.70 12.50h2.0v2.0h-2.0zM24.70 16.50h2.0v2.0h-2.0zM24.70 20.50h2.0v2.0h-2.0zM24.70 24.50h2.0v2.0h-2.0zM26.70 2.50h2.0v2.0h-2.0zM26.70 6.50h2.0v2.0h-2.0zM26.70 10.50h2.0v2.0h-2.0zM26.70 14.50h2.0v2.0h-2.0zM26.70 18.50h2.0v2.0h-2.0zM26.70 22.50h2.0v2.0h-2.0zM26.70 26.50h2.0v2.0h-2.0z" fill="#2b2b2b"/><rect x="0" y="0" width="8.6" height="18" fill="#c9c9c9"/></g></svg><svg style="left:402.0px;top:452px" width="18" height="18" viewBox="0 0 18 18"><path d="M9 1.8L15.6 4.8V12.6L9 16L2.4 12.6V4.8z" fill="#3a3a3a" stroke="#e4e4e4" stroke-width="1.1" stroke-linejoin="round"/><path d="M2.4 4.8L9 8L15.6 4.8M9 8V16" fill="none" stroke="#e4e4e4" stroke-width="1.1"/><path d="M9 3.6L12.6 5.2L9 6.8L5.4 5.2z" fill="#7fd8e6"/><path d="M4 7.4L7.8 9.2V13.6L4 11.8z" fill="#44b4c6"/><path d="M14 7.4L10.2 9.2V13.6L14 11.8z" fill="#5cc6d6"/></svg><svg style="left:421.0px;top:452px" width="18" height="18" viewBox="0 0 18 18"><clipPath id="ckB6"><circle cx="9.2" cy="9" r="6.2"/></clipPath><g clip-path="url(#ckB6)"><rect x="0" y="0" width="18" height="18" fill="#e8e8e8"/><path d="M0.70 0.50h2.0v2.0h-2.0zM0.70 4.50h2.0v2.0h-2.0zM0.70 8.50h2.0v2.0h-2.0zM0.70 12.50h2.0v2.0h-2.0zM0.70 16.50h2.0v2.0h-2.0zM0.70 20.50h2.0v2.0h-2.0zM0.70 24.50h2.0v2.0h-2.0zM2.70 2.50h2.0v2.0h-2.0zM2.70 6.50h2.0v2.0h-2.0zM2.70 10.50h2.0v2.0h-2.0zM2.70 14.50h2.0v2.0h-2.0zM2.70 18.50h2.0v2.0h-2.0zM2.70 22.50h2.0v2.0h-2.0zM2.70 26.50h2.0v2.0h-2.0zM4.70 0.50h2.0v2.0h-2.0zM4.70 4.50h2.0v2.0h-2.0zM4.70 8.50h2.0v2.0h-2.0zM4.70 12.50h2.0v2.0h-2.0zM4.70 16.50h2.0v2.0h-2.0zM4.70 20.50h2.0v2.0h-2.0zM4.70 24.50h2.0v2.0h-2.0zM6.70 2.50h2.0v2.0h-2.0zM6.70 6.50h2.0v2.0h-2.0zM6.70 10.50h2.0v2.0h-2.0zM6.70 14.50h2.0v2.0h-2.0zM6.70 18.50h2.0v2.0h-2.0zM6.70 22.50h2.0v2.0h-2.0zM6.70 26.50h2.0v2.0h-2.0zM8.70 0.50h2.0v2.0h-2.0zM8.70 4.50h2.0v2.0h-2.0zM8.70 8.50h2.0v2.0h-2.0zM8.70 12.50h2.0v2.0h-2.0zM8.70 16.50h2.0v2.0h-2.0zM8.70 20.50h2.0v2.0h-2.0zM8.70 24.50h2.0v2.0h-2.0zM10.70 2.50h2.0v2.0h-2.0zM10.70 6.50h2.0v2.0h-2.0zM10.70 10.50h2.0v2.0h-2.0zM10.70 14.50h2.0v2.0h-2.0zM10.70 18.50h2.0v2.0h-2.0zM10.70 22.50h2.0v2.0h-2.0zM10.70 26.50h2.0v2.0h-2.0zM12.70 0.50h2.0v2.0h-2.0zM12.70 4.50h2.0v2.0h-2.0zM12.70 8.50h2.0v2.0h-2.0zM12.70 12.50h2.0v2.0h-2.0zM12.70 16.50h2.0v2.0h-2.0zM12.70 20.50h2.0v2.0h-2.0zM12.70 24.50h2.0v2.0h-2.0zM14.70 2.50h2.0v2.0h-2.0zM14.70 6.50h2.0v2.0h-2.0zM14.70 10.50h2.0v2.0h-2.0zM14.70 14.50h2.0v2.0h-2.0zM14.70 18.50h2.0v2.0h-2.0zM14.70 22.50h2.0v2.0h-2.0zM14.70 26.50h2.0v2.0h-2.0zM16.70 0.50h2.0v2.0h-2.0zM16.70 4.50h2.0v2.0h-2.0zM16.70 8.50h2.0v2.0h-2.0zM16.70 12.50h2.0v2.0h-2.0zM16.70 16.50h2.0v2.0h-2.0zM16.70 20.50h2.0v2.0h-2.0zM16.70 24.50h2.0v2.0h-2.0zM18.70 2.50h2.0v2.0h-2.0zM18.70 6.50h2.0v2.0h-2.0zM18.70 10.50h2.0v2.0h-2.0zM18.70 14.50h2.0v2.0h-2.0zM18.70 18.50h2.0v2.0h-2.0zM18.70 22.50h2.0v2.0h-2.0zM18.70 26.50h2.0v2.0h-2.0zM20.70 0.50h2.0v2.0h-2.0zM20.70 4.50h2.0v2.0h-2.0zM20.70 8.50h2.0v2.0h-2.0zM20.70 12.50h2.0v2.0h-2.0zM20.70 16.50h2.0v2.0h-2.0zM20.70 20.50h2.0v2.0h-2.0zM20.70 24.50h2.0v2.0h-2.0zM22.70 2.50h2.0v2.0h-2.0zM22.70 6.50h2.0v2.0h-2.0zM22.70 10.50h2.0v2.0h-2.0zM22.70 14.50h2.0v2.0h-2.0zM22.70 18.50h2.0v2.0h-2.0zM22.70 22.50h2.0v2.0h-2.0zM22.70 26.50h2.0v2.0h-2.0zM24.70 0.50h2.0v2.0h-2.0zM24.70 4.50h2.0v2.0h-2.0zM24.70 8.50h2.0v2.0h-2.0zM24.70 12.50h2.0v2.0h-2.0zM24.70 16.50h2.0v2.0h-2.0zM24.70 20.50h2.0v2.0h-2.0zM24.70 24.50h2.0v2.0h-2.0zM26.70 2.50h2.0v2.0h-2.0zM26.70 6.50h2.0v2.0h-2.0zM26.70 10.50h2.0v2.0h-2.0zM26.70 14.50h2.0v2.0h-2.0zM26.70 18.50h2.0v2.0h-2.0zM26.70 22.50h2.0v2.0h-2.0zM26.70 26.50h2.0v2.0h-2.0z" fill="#2b2b2b"/></g></svg><svg style="left:440.0px;top:452px" width="18" height="18" viewBox="0 0 18 18"><path d="M9 3.6a3.7 3.7 0 0 1 2.2 6.7c-.5.5-.7 1-.7 1.8H7.5c0-.8-.2-1.3-.7-1.8A3.7 3.7 0 0 1 9 3.6z" fill="#c9c9c9"/><rect x="7.6" y="12.8" width="2.8" height="1.2" fill="#c9c9c9"/><rect x="8" y="14.6" width="2" height="1.2" fill="#c9c9c9"/><path d="M9 0.8V2.2M3.6 2.8L4.8 4M14.4 2.8L13.2 4M1.8 8H3.6M14.4 8H16.2" stroke="#c9c9c9" stroke-width="1.2" fill="none"/></svg><svg style="left:459.0px;top:452px" width="18" height="18" viewBox="0 0 18 18"><ellipse cx="5.6" cy="11.4" rx="3.6" ry="1.9" transform="rotate(-28 5.6 11.4)" fill="#9a9a9a"/><path d="M3 11L6 9.4M4 12.8L7.6 11" stroke="#444" stroke-width="0.7"/><circle cx="11.6" cy="8.3" r="4.7" fill="#44b4c6"/></svg><svg style="left:473.5px;top:452px" width="18" height="18" viewBox="0 0 18 18"><rect x="8" y="0.8" width="1" height="16.4" fill="#7c7c7c"/><rect x="7" y="4.8" width="3" height="8.2" rx="1" fill="#8c8c8c"/></svg><svg style="left:489.0px;top:452px" width="18" height="18" viewBox="0 0 18 18"><path d="M2.2 13.2L7 11L15.8 13.2L10.4 16.2z" fill="none" stroke="#44b4c6" stroke-width="0.7"/><path d="M4.4 12.2L12.6 15M6 14.8L12 12.2M8.4 15.6L14 12.8M7 11.2L13.8 14" stroke="#44b4c6" stroke-width="0.7"/><circle cx="9" cy="6.6" r="5.1" fill="#b8b8b8"/><path d="M6 10.6V12.6M8 11.4V13.4M10 11.4V13.4M12 10.6V12.4" stroke="#8a8a8a" stroke-width="1"/></svg><svg style="left:508.0px;top:452px" width="18" height="18" viewBox="0 0 18 18"><circle cx="6.2" cy="12" r="4.2" fill="#555"/><circle cx="8.6" cy="9.4" r="4.4" fill="#6c6c6c"/><circle cx="12.2" cy="5.8" r="4.5" fill="#c9c9c9"/></svg><div class="a" style="left:527.0px;top:452px;width:18px;height:18px;background:#5285a6"></div><svg style="left:527.0px;top:452px" width="18" height="18" viewBox="0 0 18 18"><path d="M10.4 3.6A5.6 5.6 0 1 0 10.4 14.4" fill="none" stroke="#2a5f6e" stroke-width="3.4"/><path d="M10.4 3.6A5.6 5.6 0 1 0 10.4 14.4" fill="none" stroke="#44b4c6" stroke-width="1.9"/><path d="M9.8 2.4h2v2h-2zM11.8 4.2h2v2h-2zM13.4 6.2h2v2h-2zM13.4 9.8h2v2h-2zM11.8 11.8h2v2h-2zM9.8 13.6h2v2h-2zM13.8 8h1.8v1.8h-1.8z" fill="#f0f0f0" stroke="#2d2d2d" stroke-width="0.6"/></svg><svg style="left:546.0px;top:452px" width="18" height="18" viewBox="0 0 18 18"><rect x="0.5" y="0.5" width="17" height="17" fill="#454545" stroke="#383838"/><path d="M3 3h2v2H3zM5.4 3h2v2h-2zM3 5.4h2v2H3z" fill="#3c5a60"/><rect x="6.4" y="6.8" width="8.6" height="8.4" fill="#3d5c62"/></svg><svg style="left:560.5px;top:452px" width="18" height="18" viewBox="0 0 18 18"><rect x="8" y="0.8" width="1" height="16.4" fill="#7c7c7c"/><rect x="7" y="4.8" width="3" height="8.2" rx="1" fill="#8c8c8c"/></svg><svg style="left:576.0px;top:452px" width="18" height="18" viewBox="0 0 18 18"><path d="M2.9 5V2.9H5M6.4 2.9H8.4M9.8 2.9H11.4V5M11.4 6.4V7.6M2.9 6.4V8.2M2.9 9.6V11.4H5M6.4 11.4H8.4" fill="none" stroke="#44b4c6" stroke-width="1.3"/><path d="M10.2 6.6V15.4L12.2 13.4L13.6 16.4L15.2 15.6L13.8 12.8H16.4z" fill="#bdbdbd" stroke="#444" stroke-width="0.5"/></svg><div class="menu" style="left:599px;top:432px"><span style="left:8px">视图</span><span style="left:47px">着色</span><span style="left:86px">照明</span><span style="left:125px">显示</span><span style="left:164px">渲染器</span><span style="left:215px">面板</span></div><svg style="left:595.0px;top:452px" width="18" height="18" viewBox="0 0 18 18"><rect x="8" y="0.8" width="1" height="16.4" fill="#7c7c7c"/><rect x="7" y="4.8" width="3" height="8.2" rx="1" fill="#8c8c8c"/></svg><svg style="left:609.5px;top:452px" width="18" height="18" viewBox="0 0 18 18"><rect x="2.4" y="6" width="9.4" height="6" fill="#c9c9c9"/><path d="M12.4 8.7L16.4 4.7V12.7z" fill="#c9c9c9"/></svg><svg style="left:628.5px;top:452px" width="18" height="18" viewBox="0 0 18 18"><rect x="2.4" y="4.5" width="9.4" height="5" fill="#c9c9c9"/><path d="M12.6 7L16.5 3.2V10.6z" fill="#c9c9c9"/><rect x="1.6" y="6.3" width="7.8" height="9" fill="#444"/><path d="M3.9 10.2V8.6a1.6 1.6 0 0 1 3.2 0V10.2" fill="none" stroke="#44b4c6" stroke-width="1.2"/><rect x="2.5" y="10" width="6" height="4.6" fill="#44b4c6"/><rect x="5" y="11.4" width="1" height="1.8" fill="#2a6a78"/></svg><svg style="left:647.5px;top:452px" width="18" height="18" viewBox="0 0 18 18"><rect x="2.4" y="4.5" width="9.4" height="5" fill="#c9c9c9"/><path d="M12.6 7L16.5 3.2V10.6z" fill="#c9c9c9"/><circle cx="6.4" cy="10.2" r="5" fill="#444"/><path d="M10.48 9.80L10.48 10.60L9.27 11.07L9.05 11.61L9.57 12.80L9.00 13.37L7.81 12.85L7.27 13.07L6.80 14.28L6.00 14.28L5.53 13.07L4.99 12.85L3.80 13.37L3.23 12.80L3.75 11.61L3.53 11.07L2.32 10.60L2.32 9.80L3.53 9.33L3.75 8.79L3.23 7.60L3.80 7.03L4.99 7.55L5.53 7.33L6.00 6.12L6.80 6.12L7.27 7.33L7.81 7.55L9.00 7.03L9.57 7.60L9.05 8.79L9.27 9.33z" fill="#44b4c6"/><circle cx="6.4" cy="10.2" r="1.7" fill="#444"/></svg><svg style="left:666.5px;top:452px" width="18" height="18" viewBox="0 0 18 18"><path d="M6.2 2.6H12.6V14L9.4 11.2L6.2 14z" fill="#c9c9c9"/><path d="M6.2 14.6L9.4 11.8L12.6 14.6" fill="none" stroke="#333" stroke-width="0.8"/></svg><svg style="left:685.5px;top:452px" width="18" height="18" viewBox="0 0 18 18"><path d="M2.6 15.9H13.4L16.8 11H6.6z" fill="#c9c9c9"/><path d="M5.2 12.6H15.6M4 14.3H14.4M8 15.9L11 11M11 15.9L14 11" stroke="#444" stroke-width="0.9" fill="none"/><path d="M8.4 7.8L13 3V11.6L7.2 14.4z" fill="#44b4c6" stroke="#444" stroke-width="0.6"/></svg><svg style="left:704.5px;top:452px" width="18" height="18" viewBox="0 0 18 18"><path d="M8.9 8.2V3.4M8.9 8.2H4.2" stroke="#c9c9c9" stroke-width="1.3" fill="none"/><path d="M6.7 4.6L8.9 1.8L11.1 4.6zM5.4 6L2.6 8.2L5.4 10.4z" fill="#c9c9c9"/><circle cx="13.2" cy="9.6" r="3" fill="none" stroke="#44b4c6" stroke-width="1.5"/><path d="M11 11.8L7.6 15.6" stroke="#44b4c6" stroke-width="1.8" stroke-linecap="round"/></svg><svg style="left:723.5px;top:452px" width="18" height="18" viewBox="0 0 18 18"><path d="M13 2.8L15.4 5.2L8.6 12L6.2 9.6z" fill="#c9c9c9"/><path d="M6.2 9.6L8.6 12L4.6 13.8z" fill="#44b4c6"/><path d="M9.4 14.4C11 16 14.6 15.6 14.4 12.6" fill="none" stroke="#b0b0b0" stroke-width="1"/></svg><svg style="left:738.5px;top:452px" width="18" height="18" viewBox="0 0 18 18"><rect x="8" y="0.8" width="1" height="16.4" fill="#7c7c7c"/><rect x="7" y="4.8" width="3" height="8.2" rx="1" fill="#8c8c8c"/></svg><div class="a" style="left:754.0px;top:452px;width:18px;height:18px;background:#5285a6"></div><svg style="left:754.0px;top:452px" width="18" height="18" viewBox="0 0 18 18"><rect x="3" y="2.6" width="12.4" height="12.4" fill="#2d2d2d"/><path d="M4.5 4.1H13.9V13.5H4.5zM7.6 4.1V13.5M10.8 4.1V13.5M4.5 7.2H13.9M4.5 10.4H13.9" fill="none" stroke="#e4e4e4" stroke-width="1"/></svg><svg style="left:773.0px;top:452px" width="18" height="18" viewBox="0 0 18 18"><rect x="2.4" y="3.5" width="13.2" height="10.9" fill="#2d2d2d" stroke="#e4e4e4" stroke-width="1"/><rect x="4" y="6.2" width="10" height="5.4" fill="#484848"/><path d="M3.6 4.9H14.4M3.6 13H14.4" stroke="#e4e4e4" stroke-width="0.9" stroke-dasharray="1.6 1.1"/></svg><svg style="left:792.0px;top:452px" width="18" height="18" viewBox="0 0 18 18"><rect x="2.5" y="3.5" width="13.2" height="10.9" fill="#333" stroke="#e4e4e4" stroke-width="1"/><circle cx="9" cy="9" r="3.3" fill="#44b4c6"/></svg><svg style="left:811.0px;top:452px" width="18" height="18" viewBox="0 0 18 18"><rect x="0.5" y="0.5" width="17" height="17" fill="#505050" stroke="#383838"/><rect x="2.5" y="3.5" width="13" height="11" fill="#575757"/><circle cx="9" cy="9" r="3.9" fill="#424242"/></svg><svg style="left:830.0px;top:452px" width="18" height="18" viewBox="0 0 18 18"><rect x="2.5" y="3.5" width="13.2" height="10.9" fill="#333" stroke="#e4e4e4" stroke-width="1"/><path d="M3.4 9H14.8" stroke="#44b4c6" stroke-width="1.8" stroke-dasharray="1.3 0.9"/><path d="M9.1 4.4V13.6" stroke="#44b4c6" stroke-width="1.6" stroke-dasharray="1.2 1.5"/></svg><svg style="left:849.0px;top:452px" width="18" height="18" viewBox="0 0 18 18"><rect x="2.5" y="3.5" width="13.4" height="10.9" fill="#333" stroke="#e4e4e4" stroke-width="1"/><path d="M4.4 12.8L7.6 7.6L10.8 12.8z" fill="#44b4c6"/><circle cx="11.8" cy="7.4" r="2.3" fill="#44b4c6"/></svg><svg style="left:868.0px;top:452px" width="18" height="18" viewBox="0 0 18 18"><rect x="2.5" y="3.5" width="13.2" height="10.9" fill="#333" stroke="#e4e4e4" stroke-width="1"/><text x="9.1" y="13.2" text-anchor="middle" font-family="Liberation Serif,serif" font-weight="bold" font-size="11.5" fill="#44b4c6">T</text></svg><svg style="left:882.5px;top:452px" width="18" height="18" viewBox="0 0 18 18"><rect x="8" y="0.8" width="1" height="16.4" fill="#7c7c7c"/><rect x="7" y="4.8" width="3" height="8.2" rx="1" fill="#8c8c8c"/></svg><svg style="left:898.5px;top:452px" width="18" height="18" viewBox="0 0 18 18"><path d="M9 1.8L15.6 4.8V12.6L9 16L2.4 12.6V4.8z" fill="#3a3a3a" stroke="#d4d4d4" stroke-width="0.95" stroke-linejoin="round"/><path d="M2.4 4.8L9 8L15.6 4.8M9 8V16" fill="none" stroke="#d4d4d4" stroke-width="0.95"/><path d="M9 1.8V9.6M9 9.6L2.4 12.6M9 9.6L15.6 12.6" fill="none" stroke="#8a8a8a" stroke-width="0.6"/></svg><div class="a" style="left:917.0px;top:452px;width:18px;height:18px;background:#5285a6"></div><svg style="left:917.0px;top:452px" width="18" height="18" viewBox="0 0 18 18"><path d="M9 1.8L15.6 4.8V12.6L9 16L2.4 12.6V4.8z" fill="#44b4c6" stroke="#e4e4e4" stroke-width="1.1" stroke-linejoin="round"/><path d="M9 2.4L15 5L9 7.8L3 5z" fill="#86dbe8"/><path d="M9.4 8.4L15.1 5.8V12.2L9.4 15.2z" fill="#5cc6d6"/><path d="M2.4 4.8L9 8L15.6 4.8M9 8V16" fill="none" stroke="#2d3c40" stroke-width="0.7"/></svg><svg style="left:936.0px;top:452px" width="18" height="18" viewBox="0 0 18 18"><clipPath id="ckA7"><circle cx="9.2" cy="9" r="6.2"/></clipPath><g clip-path="url(#ckA7)"><rect x="0" y="0" width="18" height="18" fill="#e8e8e8"/><path d="M0.70 0.50h2.0v2.0h-2.0zM0.70 4.50h2.0v2.0h-2.0zM0.70 8.50h2.0v2.0h-2.0zM0.70 12.50h2.0v2.0h-2.0zM0.70 16.50h2.0v2.0h-2.0zM0.70 20.50h2.0v2.0h-2.0zM0.70 24.50h2.0v2.0h-2.0zM2.70 2.50h2.0v2.0h-2.0zM2.70 6.50h2.0v2.0h-2.0zM2.70 10.50h2.0v2.0h-2.0zM2.70 14.50h2.0v2.0h-2.0zM2.70 18.50h2.0v2.0h-2.0zM2.70 22.50h2.0v2.0h-2.0zM2.70 26.50h2.0v2.0h-2.0zM4.70 0.50h2.0v2.0h-2.0zM4.70 4.50h2.0v2.0h-2.0zM4.70 8.50h2.0v2.0h-2.0zM4.70 12.50h2.0v2.0h-2.0zM4.70 16.50h2.0v2.0h-2.0zM4.70 20.50h2.0v2.0h-2.0zM4.70 24.50h2.0v2.0h-2.0zM6.70 2.50h2.0v2.0h-2.0zM6.70 6.50h2.0v2.0h-2.0zM6.70 10.50h2.0v2.0h-2.0zM6.70 14.50h2.0v2.0h-2.0zM6.70 18.50h2.0v2.0h-2.0zM6.70 22.50h2.0v2.0h-2.0zM6.70 26.50h2.0v2.0h-2.0zM8.70 0.50h2.0v2.0h-2.0zM8.70 4.50h2.0v2.0h-2.0zM8.70 8.50h2.0v2.0h-2.0zM8.70 12.50h2.0v2.0h-2.0zM8.70 16.50h2.0v2.0h-2.0zM8.70 20.50h2.0v2.0h-2.0zM8.70 24.50h2.0v2.0h-2.0zM10.70 2.50h2.0v2.0h-2.0zM10.70 6.50h2.0v2.0h-2.0zM10.70 10.50h2.0v2.0h-2.0zM10.70 14.50h2.0v2.0h-2.0zM10.70 18.50h2.0v2.0h-2.0zM10.70 22.50h2.0v2.0h-2.0zM10.70 26.50h2.0v2.0h-2.0zM12.70 0.50h2.0v2.0h-2.0zM12.70 4.50h2.0v2.0h-2.0zM12.70 8.50h2.0v2.0h-2.0zM12.70 12.50h2.0v2.0h-2.0zM12.70 16.50h2.0v2.0h-2.0zM12.70 20.50h2.0v2.0h-2.0zM12.70 24.50h2.0v2.0h-2.0zM14.70 2.50h2.0v2.0h-2.0zM14.70 6.50h2.0v2.0h-2.0zM14.70 10.50h2.0v2.0h-2.0zM14.70 14.50h2.0v2.0h-2.0zM14.70 18.50h2.0v2.0h-2.0zM14.70 22.50h2.0v2.0h-2.0zM14.70 26.50h2.0v2.0h-2.0zM16.70 0.50h2.0v2.0h-2.0zM16.70 4.50h2.0v2.0h-2.0zM16.70 8.50h2.0v2.0h-2.0zM16.70 12.50h2.0v2.0h-2.0zM16.70 16.50h2.0v2.0h-2.0zM16.70 20.50h2.0v2.0h-2.0zM16.70 24.50h2.0v2.0h-2.0zM18.70 2.50h2.0v2.0h-2.0zM18.70 6.50h2.0v2.0h-2.0zM18.70 10.50h2.0v2.0h-2.0zM18.70 14.50h2.0v2.0h-2.0zM18.70 18.50h2.0v2.0h-2.0zM18.70 22.50h2.0v2.0h-2.0zM18.70 26.50h2.0v2.0h-2.0zM20.70 0.50h2.0v2.0h-2.0zM20.70 4.50h2.0v2.0h-2.0zM20.70 8.50h2.0v2.0h-2.0zM20.70 12.50h2.0v2.0h-2.0zM20.70 16.50h2.0v2.0h-2.0zM20.70 20.50h2.0v2.0h-2.0zM20.70 24.50h2.0v2.0h-2.0zM22.70 2.50h2.0v2.0h-2.0zM22.70 6.50h2.0v2.0h-2.0zM22.70 10.50h2.0v2.0h-2.0zM22.70 14.50h2.0v2.0h-2.0zM22.70 18.50h2.0v2.0h-2.0zM22.70 22.50h2.0v2.0h-2.0zM22.70 26.50h2.0v2.0h-2.0zM24.70 0.50h2.0v2.0h-2.0zM24.70 4.50h2.0v2.0h-2.0zM24.70 8.50h2.0v2.0h-2.0zM24.70 12.50h2.0v2.0h-2.0zM24.70 16.50h2.0v2.0h-2.0zM24.70 20.50h2.0v2.0h-2.0zM24.70 24.50h2.0v2.0h-2.0zM26.70 2.50h2.0v2.0h-2.0zM26.70 6.50h2.0v2.0h-2.0zM26.70 10.50h2.0v2.0h-2.0zM26.70 14.50h2.0v2.0h-2.0zM26.70 18.50h2.0v2.0h-2.0zM26.70 22.50h2.0v2.0h-2.0zM26.70 26.50h2.0v2.0h-2.0z" fill="#2b2b2b"/><rect x="0" y="0" width="8.6" height="18" fill="#c9c9c9"/></g></svg><svg style="left:955.0px;top:452px" width="18" height="18" viewBox="0 0 18 18"><path d="M9 1.8L15.6 4.8V12.6L9 16L2.4 12.6V4.8z" fill="#3a3a3a" stroke="#e4e4e4" stroke-width="1.1" stroke-linejoin="round"/><path d="M2.4 4.8L9 8L15.6 4.8M9 8V16" fill="none" stroke="#e4e4e4" stroke-width="1.1"/><path d="M9 3.6L12.6 5.2L9 6.8L5.4 5.2z" fill="#7fd8e6"/><path d="M4 7.4L7.8 9.2V13.6L4 11.8z" fill="#44b4c6"/><path d="M14 7.4L10.2 9.2V13.6L14 11.8z" fill="#5cc6d6"/></svg><svg style="left:974.0px;top:452px" width="18" height="18" viewBox="0 0 18 18"><clipPath id="ckB8"><circle cx="9.2" cy="9" r="6.2"/></clipPath><g clip-path="url(#ckB8)"><rect x="0" y="0" width="18" height="18" fill="#e8e8e8"/><path d="M0.70 0.50h2.0v2.0h-2.0zM0.70 4.50h2.0v2.0h-2.0zM0.70 8.50h2.0v2.0h-2.0zM0.70 12.50h2.0v2.0h-2.0zM0.70 16.50h2.0v2.0h-2.0zM0.70 20.50h2.0v2.0h-2.0zM0.70 24.50h2.0v2.0h-2.0zM2.70 2.50h2.0v2.0h-2.0zM2.70 6.50h2.0v2.0h-2.0zM2.70 10.50h2.0v2.0h-2.0zM2.70 14.50h2.0v2.0h-2.0zM2.70 18.50h2.0v2.0h-2.0zM2.70 22.50h2.0v2.0h-2.0zM2.70 26.50h2.0v2.0h-2.0zM4.70 0.50h2.0v2.0h-2.0zM4.70 4.50h2.0v2.0h-2.0zM4.70 8.50h2.0v2.0h-2.0zM4.70 12.50h2.0v2.0h-2.0zM4.70 16.50h2.0v2.0h-2.0zM4.70 20.50h2.0v2.0h-2.0zM4.70 24.50h2.0v2.0h-2.0zM6.70 2.50h2.0v2.0h-2.0zM6.70 6.50h2.0v2.0h-2.0zM6.70 10.50h2.0v2.0h-2.0zM6.70 14.50h2.0v2.0h-2.0zM6.70 18.50h2.0v2.0h-2.0zM6.70 22.50h2.0v2.0h-2.0zM6.70 26.50h2.0v2.0h-2.0zM8.70 0.50h2.0v2.0h-2.0zM8.70 4.50h2.0v2.0h-2.0zM8.70 8.50h2.0v2.0h-2.0zM8.70 12.50h2.0v2.0h-2.0zM8.70 16.50h2.0v2.0h-2.0zM8.70 20.50h2.0v2.0h-2.0zM8.70 24.50h2.0v2.0h-2.0zM10.70 2.50h2.0v2.0h-2.0zM10.70 6.50h2.0v2.0h-2.0zM10.70 10.50h2.0v2.0h-2.0zM10.70 14.50h2.0v2.0h-2.0zM10.70 18.50h2.0v2.0h-2.0zM10.70 22.50h2.0v2.0h-2.0zM10.70 26.50h2.0v2.0h-2.0zM12.70 0.50h2.0v2.0h-2.0zM12.70 4.50h2.0v2.0h-2.0zM12.70 8.50h2.0v2.0h-2.0zM12.70 12.50h2.0v2.0h-2.0zM12.70 16.50h2.0v2.0h-2.0zM12.70 20.50h2.0v2.0h-2.0zM12.70 24.50h2.0v2.0h-2.0zM14.70 2.50h2.0v2.0h-2.0zM14.70 6.50h2.0v2.0h-2.0zM14.70 10.50h2.0v2.0h-2.0zM14.70 14.50h2.0v2.0h-2.0zM14.70 18.50h2.0v2.0h-2.0zM14.70 22.50h2.0v2.0h-2.0zM14.70 26.50h2.0v2.0h-2.0zM16.70 0.50h2.0v2.0h-2.0zM16.70 4.50h2.0v2.0h-2.0zM16.70 8.50h2.0v2.0h-2.0zM16.70 12.50h2.0v2.0h-2.0zM16.70 16.50h2.0v2.0h-2.0zM16.70 20.50h2.0v2.0h-2.0zM16.70 24.50h2.0v2.0h-2.0zM18.70 2.50h2.0v2.0h-2.0zM18.70 6.50h2.0v2.0h-2.0zM18.70 10.50h2.0v2.0h-2.0zM18.70 14.50h2.0v2.0h-2.0zM18.70 18.50h2.0v2.0h-2.0zM18.70 22.50h2.0v2.0h-2.0zM18.70 26.50h2.0v2.0h-2.0zM20.70 0.50h2.0v2.0h-2.0zM20.70 4.50h2.0v2.0h-2.0zM20.70 8.50h2.0v2.0h-2.0zM20.70 12.50h2.0v2.0h-2.0zM20.70 16.50h2.0v2.0h-2.0zM20.70 20.50h2.0v2.0h-2.0zM20.70 24.50h2.0v2.0h-2.0zM22.70 2.50h2.0v2.0h-2.0zM22.70 6.50h2.0v2.0h-2.0zM22.70 10.50h2.0v2.0h-2.0zM22.70 14.50h2.0v2.0h-2.0zM22.70 18.50h2.0v2.0h-2.0zM22.70 22.50h2.0v2.0h-2.0zM22.70 26.50h2.0v2.0h-2.0zM24.70 0.50h2.0v2.0h-2.0zM24.70 4.50h2.0v2.0h-2.0zM24.70 8.50h2.0v2.0h-2.0zM24.70 12.50h2.0v2.0h-2.0zM24.70 16.50h2.0v2.0h-2.0zM24.70 20.50h2.0v2.0h-2.0zM24.70 24.50h2.0v2.0h-2.0zM26.70 2.50h2.0v2.0h-2.0zM26.70 6.50h2.0v2.0h-2.0zM26.70 10.50h2.0v2.0h-2.0zM26.70 14.50h2.0v2.0h-2.0zM26.70 18.50h2.0v2.0h-2.0zM26.70 22.50h2.0v2.0h-2.0zM26.70 26.50h2.0v2.0h-2.0z" fill="#2b2b2b"/></g></svg><svg style="left:993.0px;top:452px" width="18" height="18" viewBox="0 0 18 18"><path d="M9 3.6a3.7 3.7 0 0 1 2.2 6.7c-.5.5-.7 1-.7 1.8H7.5c0-.8-.2-1.3-.7-1.8A3.7 3.7 0 0 1 9 3.6z" fill="#c9c9c9"/><rect x="7.6" y="12.8" width="2.8" height="1.2" fill="#c9c9c9"/><rect x="8" y="14.6" width="2" height="1.2" fill="#c9c9c9"/><path d="M9 0.8V2.2M3.6 2.8L4.8 4M14.4 2.8L13.2 4M1.8 8H3.6M14.4 8H16.2" stroke="#c9c9c9" stroke-width="1.2" fill="none"/></svg><svg style="left:1012.0px;top:452px" width="18" height="18" viewBox="0 0 18 18"><ellipse cx="5.6" cy="11.4" rx="3.6" ry="1.9" transform="rotate(-28 5.6 11.4)" fill="#9a9a9a"/><path d="M3 11L6 9.4M4 12.8L7.6 11" stroke="#444" stroke-width="0.7"/><circle cx="11.6" cy="8.3" r="4.7" fill="#44b4c6"/></svg><svg style="left:1026.5px;top:452px" width="18" height="18" viewBox="0 0 18 18"><rect x="8" y="0.8" width="1" height="16.4" fill="#7c7c7c"/><rect x="7" y="4.8" width="3" height="8.2" rx="1" fill="#8c8c8c"/></svg><svg style="left:1042.0px;top:452px" width="18" height="18" viewBox="0 0 18 18"><path d="M2.2 13.2L7 11L15.8 13.2L10.4 16.2z" fill="none" stroke="#44b4c6" stroke-width="0.7"/><path d="M4.4 12.2L12.6 15M6 14.8L12 12.2M8.4 15.6L14 12.8M7 11.2L13.8 14" stroke="#44b4c6" stroke-width="0.7"/><circle cx="9" cy="6.6" r="5.1" fill="#b8b8b8"/><path d="M6 10.6V12.6M8 11.4V13.4M10 11.4V13.4M12 10.6V12.4" stroke="#8a8a8a" stroke-width="1"/></svg><svg style="left:1061.0px;top:452px" width="18" height="18" viewBox="0 0 18 18"><circle cx="6.2" cy="12" r="4.2" fill="#555"/><circle cx="8.6" cy="9.4" r="4.4" fill="#6c6c6c"/><circle cx="12.2" cy="5.8" r="4.5" fill="#c9c9c9"/></svg><div class="a" style="left:1080.0px;top:452px;width:18px;height:18px;background:#5285a6"></div><svg style="left:1080.0px;top:452px" width="18" height="18" viewBox="0 0 18 18"><path d="M10.4 3.6A5.6 5.6 0 1 0 10.4 14.4" fill="none" stroke="#2a5f6e" stroke-width="3.4"/><path d="M10.4 3.6A5.6 5.6 0 1 0 10.4 14.4" fill="none" stroke="#44b4c6" stroke-width="1.9"/><path d="M9.8 2.4h2v2h-2zM11.8 4.2h2v2h-2zM13.4 6.2h2v2h-2zM13.4 9.8h2v2h-2zM11.8 11.8h2v2h-2zM9.8 13.6h2v2h-2zM13.8 8h1.8v1.8h-1.8z" fill="#f0f0f0" stroke="#2d2d2d" stroke-width="0.6"/></svg><svg style="left:1099.0px;top:452px" width="18" height="18" viewBox="0 0 18 18"><rect x="0.5" y="0.5" width="17" height="17" fill="#454545" stroke="#383838"/><path d="M3 3h2v2H3zM5.4 3h2v2h-2zM3 5.4h2v2H3z" fill="#3c5a60"/><rect x="6.4" y="6.8" width="8.6" height="8.4" fill="#3d5c62"/></svg><svg style="left:1113.5px;top:452px" width="18" height="18" viewBox="0 0 18 18"><rect x="8" y="0.8" width="1" height="16.4" fill="#7c7c7c"/><rect x="7" y="4.8" width="3" height="8.2" rx="1" fill="#8c8c8c"/></svg><svg style="left:1129.0px;top:452px" width="18" height="18" viewBox="0 0 18 18"><path d="M2.9 5V2.9H5M6.4 2.9H8.4M9.8 2.9H11.4V5M11.4 6.4V7.6M2.9 6.4V8.2M2.9 9.6V11.4H5M6.4 11.4H8.4" fill="none" stroke="#44b4c6" stroke-width="1.3"/><path d="M10.2 6.6V15.4L12.2 13.4L13.6 16.4L15.2 15.6L13.8 12.8H16.4z" fill="#bdbdbd" stroke="#444" stroke-width="0.5"/></svg><div class="vp" style="left:46px;top:98px;width:546px;height:325px"><svg width="546" height="325" style="left:0;top:0" viewBox="0 0 546 325"><path d="M4.60 0V325M23.50 0V325M42.40 0V325M61.30 0V325M80.20 0V325M99.10 0V325M118.00 0V325M136.90 0V325M155.80 0V325M174.70 0V325M212.50 0V325M231.40 0V325M250.30 0V325M269.20 0V325M288.10 0V325M307.00 0V325M325.90 0V325M344.80 0V325M363.70 0V325M382.60 0V325M401.50 0V325M420.40 0V325M439.30 0V325M458.20 0V325M477.10 0V325M496.00 0V325M514.90 0V325M533.80 0V325M0 7.40H546M0 26.30H546M0 45.20H546M0 64.10H546M0 83.00H546M0 101.90H546M0 120.80H546M0 139.70H546M0 158.60H546M0 177.50H546M0 196.40H546M0 215.30H546M0 234.20H546M0 253.10H546M0 272.00H546M0 290.90H546M0 309.80H546" stroke="#424242" stroke-width="1" fill="none"/><path d="M193.60 0V325" stroke="#464646" stroke-width="2"/></svg><div class="hud" style="left:15px;top:-1px"><b>顶点</b>:</div><div class="hud" style="left:109px;top:-1px;letter-spacing:0.45px">194</div><div class="hud" style="left:188.4px;top:-1px">0</div><div class="hud" style="left:253px;top:-1px">0</div><div class="hud" style="left:15px;top:19px"><b>边</b>:</div><div class="hud" style="left:109px;top:19px;letter-spacing:0.45px">396</div><div class="hud" style="left:188.4px;top:19px">0</div><div class="hud" style="left:253px;top:19px">0</div><div class="hud" style="left:15px;top:39px"><b>面</b>:</div><div class="hud" style="left:109px;top:39px;letter-spacing:0.45px">204</div><div class="hud" style="left:188.4px;top:39px">0</div><div class="hud" style="left:253px;top:39px">0</div><div class="hud" style="left:15px;top:59px"><b>三角形</b>:</div><div class="hud" style="left:109px;top:59px;letter-spacing:0.45px">384</div><div class="hud" style="left:188.4px;top:59px">0</div><div class="hud" style="left:253px;top:59px">0</div><div class="hud" style="left:15px;top:79px">UV:</div><div class="hud" style="left:109px;top:79px;letter-spacing:0.45px">208</div><div class="hud" style="left:188.4px;top:79px">0</div><div class="hud" style="left:253px;top:79px">0</div></div><div class="vp" style="left:599px;top:98px;width:545px;height:325px"><svg width="545" height="325" style="left:0;top:0" viewBox="0 0 545 325"><path d="M177.0 224.0L-79.5 317.6M177.0 224.0L467.0 239.4M187.4 224.6L-61.4 319.8M171.6 226.0L468.0 242.1M198.0 225.1L-42.8 322.1M165.9 228.0L469.0 244.9M208.7 225.7L-23.8 324.5M160.0 230.2L470.0 247.9M219.5 226.3L-4.3 326.9M153.9 232.4L471.1 251.0M230.5 226.8L15.6 329.4M147.4 234.8L472.3 254.4M241.6 227.4L36.1 331.9M140.6 237.3L473.5 257.9M252.8 228.0L57.2 334.5M133.5 239.9L474.9 261.6M264.1 228.6L78.7 337.2M126.1 242.6L476.3 265.5M275.6 229.2L100.9 339.9M118.2 245.4L477.7 269.7M287.3 229.9L123.6 342.8M109.9 248.5L479.3 274.2M299.1 230.5L147.0 345.7M101.2 251.6L481.0 278.9M323.1 231.8L195.7 351.7M82.3 258.6L484.7 289.5M335.3 232.4L221.1 354.8M71.9 262.3L486.8 295.3M347.7 233.1L247.2 358.1M61.0 266.3L489.0 301.6M360.3 233.7L274.0 361.4M49.3 270.6L491.5 308.4M373.0 234.4L301.7 364.8M36.9 275.1L494.1 315.8M385.9 235.1L330.2 368.4M23.6 279.9L496.9 323.9M399.0 235.8L359.6 372.0M9.4 285.1L500.0 332.6M412.2 236.5L389.9 375.8M-5.8 290.7L503.4 342.2M425.7 237.2L421.1 379.7M-22.1 296.6L507.2 352.8M439.2 237.9L453.4 383.7M-39.8 303.1L511.3 364.5M453.0 238.7L486.7 387.8M-58.8 310.0L515.9 377.5M467.0 239.4L521.1 392.0M-79.5 317.6L521.1 392.0" stroke="#545454" stroke-width="0.9" fill="none"/><path d="M311.0 231.1L171.0 348.6M92.0 255.0L482.8 284.0" stroke="#525252" stroke-width="1.7" fill="none"/><defs><radialGradient id="trg" cx="0.45" cy="0.34" r="0.74"><stop offset="0" stop-color="#e9e9e2"/><stop offset="0.5" stop-color="#e2e2da"/><stop offset="0.8" stop-color="#d0d0c8"/><stop offset="1" stop-color="#b4b4aa"/></radialGradient>
<linearGradient id="trb" x1="0" y1="0" x2="0" y2="1"><stop offset="0.55" stop-color="#000" stop-opacity="0"/><stop offset="1" stop-color="#202018" stop-opacity="0.16"/></linearGradient><radialGradient id="blush"><stop offset="0" stop-color="#e6925a" stop-opacity="1"/><stop offset="0.55" stop-color="#e89c6a" stop-opacity="0.88"/><stop offset="1" stop-color="#ecc8a8" stop-opacity="0"/></radialGradient>
<clipPath id="trc"><path d="M266.6 77.2C261.1 77.3 255.1 78.2 250.0 79.6C244.9 81.0 240.1 83.3 236.2 85.8C232.3 88.3 229.4 91.4 226.5 94.8C223.6 98.3 221.3 102.2 219.0 106.5C216.7 110.8 214.3 115.9 212.7 120.3C211.1 124.7 210.3 128.3 209.3 132.7C208.3 137.1 208.0 140.8 206.5 146.5C205.0 152.2 202.9 161.2 200.3 167.2C197.7 173.2 193.2 177.1 190.7 182.4C188.2 187.7 186.1 194.4 185.5 199.1C184.9 203.8 186.2 208.1 187.0 210.8C187.8 213.5 189.6 212.5 190.2 215.4C190.8 218.3 189.9 223.6 190.6 228.4C191.3 233.2 192.1 239.5 194.3 244.4C196.5 249.3 199.8 253.5 203.8 257.6C207.8 261.8 212.8 266.1 218.4 269.3C224.0 272.5 229.4 275.0 237.4 276.6C245.4 278.2 257.4 279.1 266.6 279.2C275.9 279.3 285.3 278.9 292.9 277.3C300.4 275.7 305.6 272.8 311.9 269.3C318.2 265.8 326.3 260.0 330.9 256.1C335.5 252.2 337.4 250.0 339.6 245.9C341.8 241.8 343.0 237.2 344.0 231.3C345.0 225.5 345.7 217.6 345.5 210.8C345.3 204.0 343.6 195.1 342.6 190.4C341.6 185.7 341.1 186.3 339.7 182.4C338.3 178.5 336.2 172.9 334.2 167.2C332.3 161.4 329.5 153.7 328.0 147.9C326.5 142.2 326.2 137.1 325.2 132.7C324.2 128.3 323.2 125.6 321.8 121.7C320.4 117.8 319.0 113.5 316.9 109.3C314.8 105.2 312.4 100.5 309.3 96.8C306.2 93.1 302.7 90.2 298.3 87.2C293.9 84.2 288.4 80.6 283.1 78.9C277.8 77.2 272.1 77.1 266.6 77.2z"/></clipPath></defs><path d="M266.6 77.2C261.1 77.3 255.1 78.2 250.0 79.6C244.9 81.0 240.1 83.3 236.2 85.8C232.3 88.3 229.4 91.4 226.5 94.8C223.6 98.3 221.3 102.2 219.0 106.5C216.7 110.8 214.3 115.9 212.7 120.3C211.1 124.7 210.3 128.3 209.3 132.7C208.3 137.1 208.0 140.8 206.5 146.5C205.0 152.2 202.9 161.2 200.3 167.2C197.7 173.2 193.2 177.1 190.7 182.4C188.2 187.7 186.1 194.4 185.5 199.1C184.9 203.8 186.2 208.1 187.0 210.8C187.8 213.5 189.6 212.5 190.2 215.4C190.8 218.3 189.9 223.6 190.6 228.4C191.3 233.2 192.1 239.5 194.3 244.4C196.5 249.3 199.8 253.5 203.8 257.6C207.8 261.8 212.8 266.1 218.4 269.3C224.0 272.5 229.4 275.0 237.4 276.6C245.4 278.2 257.4 279.1 266.6 279.2C275.9 279.3 285.3 278.9 292.9 277.3C300.4 275.7 305.6 272.8 311.9 269.3C318.2 265.8 326.3 260.0 330.9 256.1C335.5 252.2 337.4 250.0 339.6 245.9C341.8 241.8 343.0 237.2 344.0 231.3C345.0 225.5 345.7 217.6 345.5 210.8C345.3 204.0 343.6 195.1 342.6 190.4C341.6 185.7 341.1 186.3 339.7 182.4C338.3 178.5 336.2 172.9 334.2 167.2C332.3 161.4 329.5 153.7 328.0 147.9C326.5 142.2 326.2 137.1 325.2 132.7C324.2 128.3 323.2 125.6 321.8 121.7C320.4 117.8 319.0 113.5 316.9 109.3C314.8 105.2 312.4 100.5 309.3 96.8C306.2 93.1 302.7 90.2 298.3 87.2C293.9 84.2 288.4 80.6 283.1 78.9C277.8 77.2 272.1 77.1 266.6 77.2z" fill="url(#trg)"/><path d="M266.6 77.2C261.1 77.3 255.1 78.2 250.0 79.6C244.9 81.0 240.1 83.3 236.2 85.8C232.3 88.3 229.4 91.4 226.5 94.8C223.6 98.3 221.3 102.2 219.0 106.5C216.7 110.8 214.3 115.9 212.7 120.3C211.1 124.7 210.3 128.3 209.3 132.7C208.3 137.1 208.0 140.8 206.5 146.5C205.0 152.2 202.9 161.2 200.3 167.2C197.7 173.2 193.2 177.1 190.7 182.4C188.2 187.7 186.1 194.4 185.5 199.1C184.9 203.8 186.2 208.1 187.0 210.8C187.8 213.5 189.6 212.5 190.2 215.4C190.8 218.3 189.9 223.6 190.6 228.4C191.3 233.2 192.1 239.5 194.3 244.4C196.5 249.3 199.8 253.5 203.8 257.6C207.8 261.8 212.8 266.1 218.4 269.3C224.0 272.5 229.4 275.0 237.4 276.6C245.4 278.2 257.4 279.1 266.6 279.2C275.9 279.3 285.3 278.9 292.9 277.3C300.4 275.7 305.6 272.8 311.9 269.3C318.2 265.8 326.3 260.0 330.9 256.1C335.5 252.2 337.4 250.0 339.6 245.9C341.8 241.8 343.0 237.2 344.0 231.3C345.0 225.5 345.7 217.6 345.5 210.8C345.3 204.0 343.6 195.1 342.6 190.4C341.6 185.7 341.1 186.3 339.7 182.4C338.3 178.5 336.2 172.9 334.2 167.2C332.3 161.4 329.5 153.7 328.0 147.9C326.5 142.2 326.2 137.1 325.2 132.7C324.2 128.3 323.2 125.6 321.8 121.7C320.4 117.8 319.0 113.5 316.9 109.3C314.8 105.2 312.4 100.5 309.3 96.8C306.2 93.1 302.7 90.2 298.3 87.2C293.9 84.2 288.4 80.6 283.1 78.9C277.8 77.2 272.1 77.1 266.6 77.2z" fill="url(#trb)"/><g clip-path="url(#trc)"><path d="M201.6 186.0L206.0 195.5L201.6 206.5L198.5 208.0L203.0 196.0z" fill="#c0c0b6"/><path d="M295.8 198.4L301.7 188.9L304.4 199.5L300.9 210.8z" fill="#bcbcb2"/><ellipse cx="226.5" cy="136.2" rx="7.4" ry="8.6" fill="url(#blush)"/><ellipse cx="281" cy="136.9" rx="9" ry="8.8" fill="url(#blush)"/><path d="M245.9 83.7C249.3 83.5 259.7 82.8 266.6 82.8C273.5 82.8 283.8 83.5 287.2 83.7M226.5 95.2C228.0 95.1 230.7 94.8 235.5 94.5C240.3 94.2 248.5 93.5 255.5 93.4C262.5 93.3 270.5 93.6 277.6 93.8C284.7 94.0 293.3 94.6 298.3 94.8C303.2 95.0 305.8 95.1 307.3 95.2M217.6 109.3C219.4 109.3 222.7 109.2 228.6 109.0C234.5 108.8 243.9 108.3 252.8 108.2C261.6 108.1 272.9 108.1 281.7 108.2C290.6 108.3 299.9 108.8 305.9 109.0C311.9 109.2 315.7 109.3 317.6 109.3M210.0 127.2C212.3 127.2 216.9 127.1 223.8 127.2C230.7 127.2 241.5 127.5 251.4 127.5C261.3 127.5 273.2 127.5 283.1 127.5C293.0 127.5 303.8 127.2 310.7 127.2C317.6 127.1 322.2 127.2 324.5 127.2M206.5 146.8C208.9 146.9 213.9 147.0 221.0 147.2C228.1 147.4 238.7 148.0 249.3 148.2C259.9 148.4 273.8 148.3 284.5 148.2C295.2 148.1 306.2 147.8 313.5 147.6C320.8 147.4 325.6 147.3 328.0 147.2M200.3 167.5C202.6 167.8 206.5 169.0 214.4 169.6C222.2 170.2 235.2 170.9 247.4 171.2C259.6 171.5 275.5 171.4 287.5 171.2C299.5 171.0 311.6 170.6 319.4 170.0C327.2 169.4 331.7 168.2 334.2 167.9M201.6 186.0C202.8 187.2 201.6 191.5 208.9 193.0C216.2 194.5 232.0 194.8 245.4 195.2C258.8 195.6 280.8 194.7 289.2 195.2C297.6 195.7 294.7 197.9 295.8 198.4M327.2 193.0L342.6 190.1M194.0 211.3C196.1 211.9 198.4 213.7 206.7 214.9C215.0 216.1 229.9 217.7 243.9 218.4C257.9 219.1 280.0 219.0 290.7 218.9C301.4 218.8 301.9 218.1 308.2 217.6C314.5 217.1 322.5 217.2 328.7 216.0C334.9 214.8 342.7 211.4 345.5 210.5M191.3 229.8C194.0 230.7 198.5 233.7 207.4 235.4C216.3 237.1 230.8 239.0 244.7 239.8C258.6 240.6 276.7 240.8 290.7 240.3C304.7 239.8 319.8 238.2 328.7 236.8C337.6 235.4 341.4 232.5 344.0 231.6M197.9 248.8C200.1 249.6 203.1 252.0 211.1 253.5C219.1 255.0 233.1 257.1 246.1 257.9C259.1 258.7 276.1 259.1 289.2 258.3C302.4 257.5 316.8 254.9 325.0 253.2C333.2 251.5 336.0 249.0 338.2 248.1M214.0 265.6C216.2 266.1 221.2 267.6 227.0 268.4C232.8 269.2 239.3 270.0 249.1 270.4C258.9 270.8 276.4 271.0 285.6 270.7C294.9 270.4 299.5 269.5 304.6 268.6C309.7 267.7 314.3 265.8 316.3 265.2M262.4 78.2C261.2 80.7 257.1 88.4 255.5 93.4C253.9 98.4 253.5 102.5 252.8 108.2C252.1 113.9 252.0 120.8 251.4 127.5C250.8 134.2 250.0 140.9 249.3 148.2C248.6 155.5 248.0 163.4 247.4 171.2C246.7 179.0 246.0 187.3 245.4 195.2C244.8 203.1 244.0 211.0 243.9 218.4C243.8 225.8 244.3 233.2 244.7 239.8C245.1 246.4 245.4 252.8 246.1 257.9C246.8 263.0 247.9 267.0 249.1 270.4C250.3 273.8 252.7 277.0 253.4 278.3M270.7 78.2C271.9 80.8 275.8 88.8 277.6 93.8C279.4 98.8 280.8 102.6 281.7 108.2C282.6 113.8 282.6 120.8 283.1 127.5C283.6 134.2 283.8 140.9 284.5 148.2C285.2 155.5 286.7 163.4 287.5 171.2C288.3 179.0 288.7 187.2 289.2 195.2C289.7 203.1 290.5 211.4 290.7 218.9C291.0 226.4 291.0 233.7 290.7 240.3C290.5 246.9 290.1 253.2 289.2 258.3C288.4 263.4 287.1 267.3 285.6 270.7C284.2 274.1 281.4 277.4 280.5 278.8M258.3 78.9C256.2 79.7 249.7 81.1 245.9 83.7C242.1 86.3 238.4 90.3 235.5 94.5C232.6 98.7 230.6 103.5 228.6 109.0C226.7 114.5 225.1 120.8 223.8 127.2C222.5 133.6 222.6 140.1 221.0 147.2C219.4 154.3 216.4 162.0 214.4 169.6C212.4 177.2 210.2 185.5 208.9 193.0C207.6 200.5 207.0 207.8 206.7 214.9C206.5 222.0 206.7 229.0 207.4 235.4C208.1 241.8 209.0 248.1 211.1 253.5C213.2 258.9 217.1 264.2 219.8 267.8C222.5 271.4 225.9 273.9 227.1 275.1M276.2 78.9C278.0 79.7 283.5 81.0 287.2 83.7C290.9 86.3 295.2 90.6 298.3 94.8C301.4 99.0 303.8 103.6 305.9 109.0C308.0 114.4 309.4 120.8 310.7 127.2C312.0 133.6 312.1 140.5 313.5 147.6C314.9 154.7 317.2 163.6 319.4 170.0C321.6 176.4 325.1 182.2 326.5 186.0C327.9 189.8 327.6 188.0 328.0 193.0C328.4 198.0 328.6 208.7 328.7 216.0C328.8 223.3 329.3 230.6 328.7 236.8C328.1 243.0 327.1 248.5 325.0 253.2C322.9 257.9 319.7 261.4 316.3 265.2C312.9 269.0 306.6 274.1 304.6 275.9" fill="none" stroke="#101058" stroke-width="0.62"/><path d="M247.4 171.2L287.5 171.2M245.4 195.2L289.2 195.2M244.7 239.8L290.7 240.3" fill="none" stroke="#101058" stroke-width="1.2"/><path d="M199.4 167.0L190.6 180.9L185.5 199.1L187.0 210.8L192.1 211.6L201.6 206.5L206.0 195.5L201.6 186.0L214.4 169.6M190.6 182.3L201.6 186.0M201.6 186.0L195.7 197.0M185.5 199.9L195.7 197.0M195.7 197.0L195.0 208.6M195.7 197.0L204.5 202.0M287.5 171.2L301.7 188.9L326.5 186.0M301.7 188.9L304.4 199.5L322.8 205.7M304.4 199.5L300.9 210.8L308.2 215.9L316.3 218.1L322.8 205.7L327.2 196.2L326.5 186.0M289.2 195.2L295.8 198.4L301.7 188.9M295.8 198.4L300.9 210.8" fill="none" stroke="#101058" stroke-width="0.62"/></g><ellipse cx="233.39999999999998" cy="124.19999999999999" rx="3.4" ry="4.5" fill="#0c0c0c" transform="rotate(8 233.39999999999998 124.19999999999999)"/><ellipse cx="275.20000000000005" cy="125.5" rx="4.1" ry="5" fill="#0c0c0c" transform="rotate(-6 275.20000000000005 125.5)"/><path d="M243.8 134.4C244.2 134.8 245.1 136.2 246.0 136.6C246.9 137.0 248.1 137.1 249.0 136.8C249.9 136.5 250.9 135.5 251.4 134.8C251.9 134.1 252.0 132.8 252.1 132.4M252.1 132.4C252.3 132.9 252.3 134.4 253.0 135.2C253.7 136.0 255.2 136.8 256.2 137.0C257.2 137.2 258.2 136.8 259.0 136.4C259.8 136.0 260.7 135.1 261.0 134.8M252.10000000000002 129.4V132.6" fill="none" stroke="#4a4a36" stroke-width="1"/></svg><div class="hud" style="left:15px;top:-1px"><b>顶点</b>:</div><div class="hud" style="left:109px;top:-1px;letter-spacing:0.45px">194</div><div class="hud" style="left:188.4px;top:-1px">0</div><div class="hud" style="left:253px;top:-1px">0</div><div class="hud" style="left:15px;top:19px"><b>边</b>:</div><div class="hud" style="left:109px;top:19px;letter-spacing:0.45px">396</div><div class="hud" style="left:188.4px;top:19px">0</div><div class="hud" style="left:253px;top:19px">0</div><div class="hud" style="left:15px;top:39px"><b>面</b>:</div><div class="hud" style="left:109px;top:39px;letter-spacing:0.45px">204</div><div class="hud" style="left:188.4px;top:39px">0</div><div class="hud" style="left:253px;top:39px">0</div><div class="hud" style="left:15px;top:59px"><b>三角形</b>:</div><div class="hud" style="left:109px;top:59px;letter-spacing:0.45px">384</div><div class="hud" style="left:188.4px;top:59px">0</div><div class="hud" style="left:253px;top:59px">0</div><div class="hud" style="left:15px;top:79px">UV:</div><div class="hud" style="left:109px;top:79px;letter-spacing:0.45px">208</div><div class="hud" style="left:188.4px;top:79px">0</div><div class="hud" style="left:253px;top:79px">0</div></div><div class="vp" style="left:46px;top:471px;width:546px;height:325px"><svg width="546" height="325" style="left:0;top:0" viewBox="0 0 546 325"><path d="M4.20 0V325M25.50 0V325M46.80 0V325M68.10 0V325M89.40 0V325M110.70 0V325M132.00 0V325M153.30 0V325M174.60 0V325M195.90 0V325M217.20 0V325M259.80 0V325M281.10 0V325M302.40 0V325M323.70 0V325M345.00 0V325M366.30 0V325M387.60 0V325M408.90 0V325M430.20 0V325M451.50 0V325M472.80 0V325M494.10 0V325M515.40 0V325M536.70 0V325M0 5.80H546M0 27.10H546M0 48.40H546M0 69.70H546M0 91.00H546M0 112.30H546M0 133.60H546M0 154.90H546M0 176.20H546M0 197.50H546M0 218.80H546M0 240.10H546M0 261.40H546M0 282.70H546" stroke="#424242" stroke-width="1" fill="none"/><path d="M238.50 0V325" stroke="#464646" stroke-width="2"/><path d="M0 304.00H546" stroke="#464646" stroke-width="2"/><defs><radialGradient id="blg" cx="0.55" cy="0.38" r="0.75"><stop offset="0" stop-color="#bfbfbf"/><stop offset="0.55" stop-color="#b8b8b8"/><stop offset="0.85" stop-color="#a6a6a6"/><stop offset="1" stop-color="#929292"/></radialGradient>
<linearGradient id="blh" x1="0" x2="1" y1="0" y2="0"><stop offset="0" stop-color="#000" stop-opacity="0.14"/><stop offset="0.22" stop-color="#000" stop-opacity="0.03"/><stop offset="0.5" stop-color="#fff" stop-opacity="0.03"/><stop offset="0.8" stop-color="#000" stop-opacity="0.02"/><stop offset="1" stop-color="#000" stop-opacity="0.10"/></linearGradient></defs><path d="M237.5 65.2C234.3 65.5 225.8 66.2 221.0 67.2C216.2 68.2 212.8 69.5 209.0 71.2C205.2 72.9 201.8 74.7 198.5 77.2C195.2 79.7 192.5 82.8 189.5 86.2C186.5 89.6 183.1 93.6 180.5 97.5C177.9 101.4 175.8 105.5 173.8 109.5C171.8 113.5 170.0 117.2 168.5 121.5C167.0 125.8 165.9 130.5 164.8 135.0C163.7 139.5 163.2 143.5 161.8 148.5C160.4 153.5 158.5 159.2 156.5 165.0C154.5 170.8 151.7 178.4 149.8 183.5C147.9 188.6 146.6 190.8 145.2 195.5C143.8 200.2 142.4 206.5 141.5 212.0C140.6 217.5 140.1 222.8 140.0 228.5C139.9 234.2 140.4 239.8 141.2 246.5C141.9 253.2 142.4 263.0 144.5 269.0C146.6 275.0 150.2 278.5 153.5 282.5C156.8 286.5 159.8 289.8 164.0 293.0C168.2 296.2 172.8 300.0 179.0 302.0C185.2 304.0 191.6 304.0 201.5 304.8C211.4 305.5 226.0 306.5 238.5 306.5C251.0 306.5 266.2 305.5 276.3 304.8C286.4 304.0 292.6 304.0 298.8 302.0C305.1 300.0 309.6 296.2 313.8 293.0C318.1 289.8 321.1 286.5 324.3 282.5C327.6 278.5 331.2 275.0 333.3 269.0C335.4 263.0 335.9 253.2 336.6 246.5C337.4 239.8 337.9 234.2 337.8 228.5C337.8 222.8 337.2 217.5 336.3 212.0C335.4 206.5 334.0 200.2 332.6 195.5C331.2 190.8 329.9 188.6 328.0 183.5C326.1 178.4 323.3 170.8 321.3 165.0C319.3 159.2 317.4 153.5 316.0 148.5C314.6 143.5 314.2 139.5 313.0 135.0C311.8 130.5 310.6 125.8 309.0 121.5C307.4 117.2 305.7 113.5 303.7 109.5C301.7 105.5 299.6 101.4 297.0 97.5C294.4 93.6 291.0 89.6 288.0 86.2C285.0 82.8 282.2 79.7 279.0 77.2C275.8 74.7 272.2 72.9 268.5 71.2C264.8 69.5 261.2 68.2 256.5 67.2C251.8 66.2 243.2 65.5 240.0 65.2C236.8 64.9 240.7 64.9 237.5 65.2z" fill="url(#blg)"/><path d="M237.5 65.2C234.3 65.5 225.8 66.2 221.0 67.2C216.2 68.2 212.8 69.5 209.0 71.2C205.2 72.9 201.8 74.7 198.5 77.2C195.2 79.7 192.5 82.8 189.5 86.2C186.5 89.6 183.1 93.6 180.5 97.5C177.9 101.4 175.8 105.5 173.8 109.5C171.8 113.5 170.0 117.2 168.5 121.5C167.0 125.8 165.9 130.5 164.8 135.0C163.7 139.5 163.2 143.5 161.8 148.5C160.4 153.5 158.5 159.2 156.5 165.0C154.5 170.8 151.7 178.4 149.8 183.5C147.9 188.6 146.6 190.8 145.2 195.5C143.8 200.2 142.4 206.5 141.5 212.0C140.6 217.5 140.1 222.8 140.0 228.5C139.9 234.2 140.4 239.8 141.2 246.5C141.9 253.2 142.4 263.0 144.5 269.0C146.6 275.0 150.2 278.5 153.5 282.5C156.8 286.5 159.8 289.8 164.0 293.0C168.2 296.2 172.8 300.0 179.0 302.0C185.2 304.0 191.6 304.0 201.5 304.8C211.4 305.5 226.0 306.5 238.5 306.5C251.0 306.5 266.2 305.5 276.3 304.8C286.4 304.0 292.6 304.0 298.8 302.0C305.1 300.0 309.6 296.2 313.8 293.0C318.1 289.8 321.1 286.5 324.3 282.5C327.6 278.5 331.2 275.0 333.3 269.0C335.4 263.0 335.9 253.2 336.6 246.5C337.4 239.8 337.9 234.2 337.8 228.5C337.8 222.8 337.2 217.5 336.3 212.0C335.4 206.5 334.0 200.2 332.6 195.5C331.2 190.8 329.9 188.6 328.0 183.5C326.1 178.4 323.3 170.8 321.3 165.0C319.3 159.2 317.4 153.5 316.0 148.5C314.6 143.5 314.2 139.5 313.0 135.0C311.8 130.5 310.6 125.8 309.0 121.5C307.4 117.2 305.7 113.5 303.7 109.5C301.7 105.5 299.6 101.4 297.0 97.5C294.4 93.6 291.0 89.6 288.0 86.2C285.0 82.8 282.2 79.7 279.0 77.2C275.8 74.7 272.2 72.9 268.5 71.2C264.8 69.5 261.2 68.2 256.5 67.2C251.8 66.2 243.2 65.5 240.0 65.2C236.8 64.9 240.7 64.9 237.5 65.2z" fill="url(#blh)"/><path d="M155.0 192.0L155.0 211.5L163.0 222.5L168.0 224.5L174.0 219.0L184.0 203.0L176.0 189.0z" fill="#bcbcbc" opacity="0.3"/><path d="M182.8 201.3L187.4 204.6L180.6 218.0L171.5 224.2L170.8 222.6L178.6 216.0z" fill="#7c7c7c"/><path d="M322.6 192.0L322.6 211.5L314.6 222.5L309.6 224.5L303.6 219.0L293.6 203.0L301.6 189.0z" fill="#b8b8b8" opacity="0.25"/><path d="M294.8 201.3L290.2 204.6L297.0 218.0L306.1 224.2L306.8 222.6L299.0 216.0z" fill="#7c7c7c"/><path d="M235.9 269.9L238.4 305.0L242.0 270.0M239.0 269.0L238.4 305.0M235.9 269.9L238.9 272.2L242.0 270.0M236.0 229.5L239.0 269.0L242.0 229.5M239.0 228.5L239.0 269.0M236.0 229.5L239.0 231.7L242.0 229.5M236.0 178.0L239.0 228.5L242.0 178.0M239.0 177.0L239.0 228.5M236.0 178.0L239.0 180.2L242.0 178.0M242.0 176.0L239.0 151.8L236.0 176.0M239.0 177.0L239.0 151.8M242.0 176.0L239.0 173.8L236.0 176.0M242.0 150.8L239.0 126.8L236.0 150.8M239.0 151.8L239.0 126.8M242.0 150.8L239.0 148.6L236.0 150.8M242.0 125.8L239.0 88.8L236.0 125.8M239.0 126.8L239.0 88.8M242.0 125.8L239.0 123.6L236.0 125.8M242.0 87.8L238.3 63.4L235.9 87.9M239.0 88.8L238.3 63.4M242.0 87.8L238.9 85.6L235.9 87.9M237.7 174.1L174.8 184.3L238.4 180.1M239.0 177.0L174.8 184.3M237.7 174.1L235.8 177.4L238.4 180.1M171.8 184.6L170.8 202.3L177.4 185.8M174.8 184.3L170.8 202.3M171.8 184.6L174.1 187.2L177.4 185.8M167.9 202.9L169.2 215.8L173.5 203.5M170.8 202.3L169.2 215.8M167.9 202.9L170.4 205.3L173.5 203.5M166.2 216.0L167.0 224.8L171.8 217.4M169.2 215.8L167.0 224.8M166.2 216.0L168.5 218.7L171.8 217.4M239.6 180.1L302.4 184.3L240.3 174.1M239.0 177.0L302.4 184.3M239.6 180.1L242.2 177.4L240.3 174.1M299.8 185.9L306.8 202.3L305.4 184.5M302.4 184.3L306.8 202.3M299.8 185.9L303.1 187.2L305.4 184.5M304.1 203.5L308.4 215.8L309.7 202.9M306.8 202.3L308.4 215.8M304.1 203.5L307.2 205.3L309.7 202.9M305.8 217.3L310.4 224.8L311.4 216.1M308.4 215.8L310.4 224.8M305.8 217.3L309.1 218.7L311.4 216.1" fill="none" stroke="#46f59f" stroke-width="1.1" stroke-linejoin="round"/><circle cx="238.3" cy="63.4" r="3.2" fill="none" stroke="#46f59f" stroke-width="1.1"/><circle cx="239.0" cy="88.8" r="3.2" fill="none" stroke="#46f59f" stroke-width="1.1"/><circle cx="239.0" cy="126.8" r="3.2" fill="none" stroke="#46f59f" stroke-width="1.1"/><circle cx="239.0" cy="151.8" r="3.2" fill="none" stroke="#46f59f" stroke-width="1.1"/><circle cx="239.0" cy="177.0" r="3.2" fill="none" stroke="#46f59f" stroke-width="1.1"/><circle cx="239.0" cy="228.5" r="3.2" fill="none" stroke="#46f59f" stroke-width="1.1"/><circle cx="239.0" cy="269.0" r="3.2" fill="none" stroke="#46f59f" stroke-width="1.1"/><circle cx="238.4" cy="305.0" r="3.2" fill="none" stroke="#46f59f" stroke-width="1.1"/><circle cx="174.8" cy="184.3" r="3.0" fill="none" stroke="#46f59f" stroke-width="1.1"/><circle cx="170.8" cy="202.3" r="3.0" fill="none" stroke="#46f59f" stroke-width="1.1"/><circle cx="169.2" cy="215.8" r="3.0" fill="none" stroke="#46f59f" stroke-width="1.1"/><circle cx="167.0" cy="224.8" r="3.0" fill="none" stroke="#46f59f" stroke-width="1.1"/><circle cx="302.4" cy="184.3" r="3.0" fill="none" stroke="#46f59f" stroke-width="1.1"/><circle cx="306.8" cy="202.3" r="3.0" fill="none" stroke="#46f59f" stroke-width="1.1"/><circle cx="308.4" cy="215.8" r="3.0" fill="none" stroke="#46f59f" stroke-width="1.1"/><circle cx="310.4" cy="224.8" r="3.0" fill="none" stroke="#46f59f" stroke-width="1.1"/><path d="M235.1 63.4H241.5M238.3 60.2V66.6M235.8 88.8H242.2M239.0 85.6V92.0M235.8 126.8H242.2M239.0 123.6V130.0M235.8 151.8H242.2M239.0 148.6V155.0M235.8 177.0H242.2M239.0 173.8V180.2M235.8 228.5H242.2M239.0 225.3V231.7M235.8 269.0H242.2M239.0 265.8V272.2M235.2 305.0H241.6M238.4 301.8V308.2M171.8 184.3H177.8M174.8 181.3V187.3M167.8 202.3H173.8M170.8 199.3V205.3M166.2 215.8H172.2M169.2 212.8V218.8M164.0 224.8H170.0M167.0 221.8V227.8M299.4 184.3H305.4M302.4 181.3V187.3M303.8 202.3H309.8M306.8 199.3V205.3M305.4 215.8H311.4M308.4 212.8V218.8M307.4 224.8H313.4M310.4 221.8V227.8" fill="none" stroke="#46f59f" stroke-width="0.77"/><rect x="238.6" y="63.0" width="1.6" height="1.2" fill="#e01818"/><rect x="238.0" y="61.2" width="0.8" height="2.2" fill="#107010"/><rect x="239.3" y="88.4" width="1.6" height="1.2" fill="#e01818"/><rect x="238.7" y="86.6" width="0.8" height="2.2" fill="#107010"/><rect x="239.3" y="126.4" width="1.6" height="1.2" fill="#e01818"/><rect x="238.7" y="124.6" width="0.8" height="2.2" fill="#107010"/><rect x="239.3" y="151.4" width="1.6" height="1.2" fill="#e01818"/><rect x="238.7" y="149.6" width="0.8" height="2.2" fill="#107010"/><rect x="239.3" y="176.6" width="1.6" height="1.2" fill="#e01818"/><rect x="238.7" y="174.8" width="0.8" height="2.2" fill="#107010"/><rect x="239.3" y="228.1" width="1.6" height="1.2" fill="#e01818"/><rect x="238.7" y="226.3" width="0.8" height="2.2" fill="#107010"/><rect x="239.3" y="268.6" width="1.6" height="1.2" fill="#e01818"/><rect x="238.7" y="266.8" width="0.8" height="2.2" fill="#107010"/><rect x="238.7" y="304.6" width="1.6" height="1.2" fill="#e01818"/><rect x="238.1" y="302.8" width="0.8" height="2.2" fill="#107010"/><rect x="174.6" y="183.5" width="1.2" height="1.2" fill="#0808c0"/><rect x="174.4" y="182.3" width="0.8" height="1.4" fill="#107010"/><rect x="170.6" y="201.5" width="1.2" height="1.2" fill="#0808c0"/><rect x="170.4" y="200.3" width="0.8" height="1.4" fill="#107010"/><rect x="169.0" y="215.0" width="1.2" height="1.2" fill="#0808c0"/><rect x="168.8" y="213.8" width="0.8" height="1.4" fill="#107010"/><rect x="166.8" y="224.0" width="1.2" height="1.2" fill="#0808c0"/><rect x="166.6" y="222.8" width="0.8" height="1.4" fill="#107010"/><rect x="302.2" y="183.5" width="1.2" height="1.2" fill="#0808c0"/><rect x="302.0" y="182.3" width="0.8" height="1.4" fill="#107010"/><rect x="306.6" y="201.5" width="1.2" height="1.2" fill="#0808c0"/><rect x="306.4" y="200.3" width="0.8" height="1.4" fill="#107010"/><rect x="308.2" y="215.0" width="1.2" height="1.2" fill="#0808c0"/><rect x="308.0" y="213.8" width="0.8" height="1.4" fill="#107010"/><rect x="310.2" y="224.0" width="1.2" height="1.2" fill="#0808c0"/><rect x="310.0" y="222.8" width="0.8" height="1.4" fill="#107010"/></svg><div class="hud" style="left:15px;top:-1px"><b>顶点</b>:</div><div class="hud" style="left:109px;top:-1px;letter-spacing:0.45px">194</div><div class="hud" style="left:188.4px;top:-1px">0</div><div class="hud" style="left:253px;top:-1px">0</div><div class="hud" style="left:15px;top:19px"><b>边</b>:</div><div class="hud" style="left:109px;top:19px;letter-spacing:0.45px">396</div><div class="hud" style="left:188.4px;top:19px">0</div><div class="hud" style="left:253px;top:19px">0</div><div class="hud" style="left:15px;top:39px"><b>面</b>:</div><div class="hud" style="left:109px;top:39px;letter-spacing:0.45px">204</div><div class="hud" style="left:188.4px;top:39px">0</div><div class="hud" style="left:253px;top:39px">0</div><div class="hud" style="left:15px;top:59px"><b>三角形</b>:</div><div class="hud" style="left:109px;top:59px;letter-spacing:0.45px">384</div><div class="hud" style="left:188.4px;top:59px">0</div><div class="hud" style="left:253px;top:59px">0</div><div class="hud" style="left:15px;top:79px">UV:</div><div class="hud" style="left:109px;top:79px;letter-spacing:0.45px">208</div><div class="hud" style="left:188.4px;top:79px">0</div><div class="hud" style="left:253px;top:79px">0</div></div><div class="vp" style="left:599px;top:471px;width:545px;height:325px"><svg width="545" height="325" style="left:0;top:0" viewBox="0 0 545 325"><path d="M30.50 0V325M63.50 0V325M96.50 0V325M129.50 0V325M162.50 0V325M195.50 0V325M228.50 0V325M261.50 0V325M327.50 0V325M360.50 0V325M393.50 0V325M426.50 0V325M459.50 0V325M492.50 0V325M525.50 0V325M0 19.50H545M0 52.50H545M0 85.50H545M0 118.50H545M0 151.50H545M0 184.50H545M0 217.50H545M0 250.50H545M0 283.50H545M0 316.50H545" stroke="#424242" stroke-width="1" fill="none"/><path d="M294.50 0V325" stroke="#464646" stroke-width="2"/><defs><radialGradient id="brg" cx="0.52" cy="0.40" r="0.8"><stop offset="0" stop-color="#c0c0c0"/><stop offset="0.5" stop-color="#b9b9b9"/><stop offset="0.82" stop-color="#a8a8a8"/><stop offset="1" stop-color="#8e8e8e"/></radialGradient>
<linearGradient id="brh" x1="0" x2="1" y1="0" y2="0"><stop offset="0" stop-color="#000" stop-opacity="0.12"/><stop offset="0.2" stop-color="#000" stop-opacity="0.02"/><stop offset="0.5" stop-color="#fff" stop-opacity="0.03"/><stop offset="0.75" stop-color="#000" stop-opacity="0.03"/><stop offset="1" stop-color="#000" stop-opacity="0.16"/></linearGradient>
<linearGradient id="brf" gradientUnits="userSpaceOnUse" x1="204.0" y1="205.0" x2="216.0" y2="218.0"><stop offset="0" stop-color="#c2c2c2" stop-opacity="0.06"/><stop offset="0.35" stop-color="#c2c2c2" stop-opacity="0.4"/><stop offset="0.7" stop-color="#aaaaaa" stop-opacity="0.95"/><stop offset="1" stop-color="#787878"/></linearGradient></defs><path d="M242.0 -9.0C240.9 -7.5 238.3 -3.1 235.3 0.0C232.3 3.1 226.9 6.2 224.1 9.3C221.3 12.4 220.9 13.9 218.6 18.5C216.3 23.1 212.8 30.8 210.3 37.0C207.8 43.2 205.9 49.4 203.8 55.6C201.7 61.8 199.1 69.2 197.7 74.1C196.3 79.0 196.1 80.3 195.4 85.2C194.6 90.1 194.1 98.8 193.2 103.7C192.4 108.6 191.5 110.5 190.3 114.8C189.1 119.1 187.8 124.1 186.2 129.6C184.6 135.2 182.2 142.5 180.6 148.1C179.0 153.7 178.4 157.4 176.7 163.0C175.0 168.6 172.2 175.3 170.4 181.5C168.6 187.7 166.9 193.8 165.8 200.0C164.7 206.2 164.1 212.4 163.6 218.6C163.1 224.8 162.9 230.9 163.0 237.1C163.1 243.3 163.4 249.4 164.0 255.6C164.6 261.8 165.6 267.3 166.7 274.1C167.8 280.9 168.4 290.1 170.4 296.3C172.4 302.5 175.7 306.5 178.8 311.1C181.9 315.7 186.0 320.3 189.0 324.1C192.0 327.9 195.7 332.4 197.0 334.0L392.0 334.0C393.4 332.4 397.3 327.9 400.4 324.1C403.5 320.3 407.4 315.1 410.6 311.1C413.9 307.1 417.6 306.2 419.9 300.0C422.2 293.8 423.4 281.5 424.5 274.1C425.6 266.7 426.0 261.8 426.4 255.6C426.8 249.4 427.1 243.3 426.9 237.1C426.7 230.9 426.1 224.8 425.4 218.6C424.7 212.4 423.7 206.2 422.7 200.0C421.7 193.8 421.1 187.7 419.5 181.5C417.9 175.3 414.9 168.6 413.0 163.0C411.1 157.4 409.7 153.7 407.9 148.1C406.1 142.5 404.1 135.8 402.3 129.6C400.5 123.4 398.7 117.3 397.3 111.1C395.9 104.9 395.0 98.8 394.0 92.6C393.0 86.4 392.6 80.3 391.2 74.1C389.8 67.9 387.8 61.8 385.6 55.6C383.4 49.4 381.1 43.8 378.2 37.0C375.3 30.2 371.9 21.0 368.0 14.8C364.1 8.6 358.6 4.0 355.1 0.0C351.6 -4.0 348.4 -7.5 347.0 -9.0z" fill="url(#brg)"/><path d="M242.0 -9.0C240.9 -7.5 238.3 -3.1 235.3 0.0C232.3 3.1 226.9 6.2 224.1 9.3C221.3 12.4 220.9 13.9 218.6 18.5C216.3 23.1 212.8 30.8 210.3 37.0C207.8 43.2 205.9 49.4 203.8 55.6C201.7 61.8 199.1 69.2 197.7 74.1C196.3 79.0 196.1 80.3 195.4 85.2C194.6 90.1 194.1 98.8 193.2 103.7C192.4 108.6 191.5 110.5 190.3 114.8C189.1 119.1 187.8 124.1 186.2 129.6C184.6 135.2 182.2 142.5 180.6 148.1C179.0 153.7 178.4 157.4 176.7 163.0C175.0 168.6 172.2 175.3 170.4 181.5C168.6 187.7 166.9 193.8 165.8 200.0C164.7 206.2 164.1 212.4 163.6 218.6C163.1 224.8 162.9 230.9 163.0 237.1C163.1 243.3 163.4 249.4 164.0 255.6C164.6 261.8 165.6 267.3 166.7 274.1C167.8 280.9 168.4 290.1 170.4 296.3C172.4 302.5 175.7 306.5 178.8 311.1C181.9 315.7 186.0 320.3 189.0 324.1C192.0 327.9 195.7 332.4 197.0 334.0L392.0 334.0C393.4 332.4 397.3 327.9 400.4 324.1C403.5 320.3 407.4 315.1 410.6 311.1C413.9 307.1 417.6 306.2 419.9 300.0C422.2 293.8 423.4 281.5 424.5 274.1C425.6 266.7 426.0 261.8 426.4 255.6C426.8 249.4 427.1 243.3 426.9 237.1C426.7 230.9 426.1 224.8 425.4 218.6C424.7 212.4 423.7 206.2 422.7 200.0C421.7 193.8 421.1 187.7 419.5 181.5C417.9 175.3 414.9 168.6 413.0 163.0C411.1 157.4 409.7 153.7 407.9 148.1C406.1 142.5 404.1 135.8 402.3 129.6C400.5 123.4 398.7 117.3 397.3 111.1C395.9 104.9 395.0 98.8 394.0 92.6C393.0 86.4 392.6 80.3 391.2 74.1C389.8 67.9 387.8 61.8 385.6 55.6C383.4 49.4 381.1 43.8 378.2 37.0C375.3 30.2 371.9 21.0 368.0 14.8C364.1 8.6 358.6 4.0 355.1 0.0C351.6 -4.0 348.4 -7.5 347.0 -9.0z" fill="url(#brh)"/><path d="M187.1 187.0L229.7 179.7L229.7 202.8L200.1 230.6L192.7 227.8L186.7 226.5L176.9 218.6z" fill="url(#brf)"/><path d="M288.6 297.3L294.3 359.0L300.0 297.3M294.3 295.5L294.3 359.0M288.6 297.3L294.3 301.5L300.0 297.3M288.4 235.2L294.3 295.5L299.8 235.2M294.1 233.4L294.3 295.5M288.4 235.2L294.1 239.4L299.8 235.2M288.4 155.2L294.1 233.4L299.8 155.2M294.1 153.4L294.1 233.4M288.4 155.2L294.1 159.4L299.8 155.2M299.8 151.6L294.3 113.8L288.4 151.6M294.1 153.4L294.3 113.8M299.8 151.6L294.1 147.4L288.4 151.6M300.0 112.0L294.3 75.7L288.6 112.0M294.3 113.8L294.3 75.7M300.0 112.0L294.3 107.8L288.6 112.0M300.0 73.9L294.3 17.0L288.6 73.9M294.3 75.7L294.3 17.0M300.0 73.9L294.3 69.7L288.6 73.9M300.0 15.2L294.3 -16.0L288.6 15.2M294.3 17.0L294.3 -16.0M300.0 15.2L294.3 11.0L288.6 15.2M291.5 148.0L226.6 163.4L293.2 159.3M294.1 153.4L226.6 163.4M291.5 148.0L288.2 154.3L293.2 159.3M222.4 162.1L207.6 190.3L229.3 166.9M226.6 163.4L207.6 190.3M222.4 162.1L224.1 167.0L229.3 166.9M203.3 189.4L195.4 212.1L210.6 193.5M207.6 190.3L195.4 212.1M203.3 189.4L205.5 194.1L210.6 193.5M191.1 211.0L186.6 226.5L198.3 215.4M195.4 212.1L186.6 226.5M191.1 211.0L193.1 215.9L198.3 215.4" fill="none" stroke="#46f59f" stroke-width="1.3" stroke-linejoin="round"/><circle cx="294.3" cy="-16.0" r="6.0" fill="none" stroke="#46f59f" stroke-width="1.3"/><circle cx="294.3" cy="17.0" r="6.0" fill="none" stroke="#46f59f" stroke-width="1.3"/><circle cx="294.3" cy="75.7" r="6.0" fill="none" stroke="#46f59f" stroke-width="1.3"/><circle cx="294.3" cy="113.8" r="6.0" fill="none" stroke="#46f59f" stroke-width="1.3"/><circle cx="294.1" cy="153.4" r="6.0" fill="none" stroke="#46f59f" stroke-width="1.3"/><circle cx="294.1" cy="233.4" r="6.0" fill="none" stroke="#46f59f" stroke-width="1.3"/><circle cx="294.3" cy="295.5" r="6.0" fill="none" stroke="#46f59f" stroke-width="1.3"/><circle cx="294.3" cy="359.0" r="6.0" fill="none" stroke="#46f59f" stroke-width="1.3"/><circle cx="226.6" cy="163.4" r="4.4" fill="none" stroke="#46f59f" stroke-width="1.3"/><circle cx="207.6" cy="190.3" r="4.4" fill="none" stroke="#46f59f" stroke-width="1.3"/><circle cx="195.4" cy="212.1" r="4.4" fill="none" stroke="#46f59f" stroke-width="1.3"/><circle cx="186.6" cy="226.5" r="4.4" fill="none" stroke="#46f59f" stroke-width="1.3"/><path d="M288.3 -16.0H300.3M294.3 -22.0V-10.0M288.3 17.0H300.3M294.3 11.0V23.0M288.3 75.7H300.3M294.3 69.7V81.7M288.3 113.8H300.3M294.3 107.8V119.8M288.1 153.4H300.1M294.1 147.4V159.4M288.1 233.4H300.1M294.1 227.4V239.4M288.3 295.5H300.3M294.3 289.5V301.5M288.3 359.0H300.3M294.3 353.0V365.0M222.2 163.4H231.0M226.6 159.0V167.8M203.2 190.3H212.0M207.6 185.9V194.7M191.0 212.1H199.8M195.4 207.7V216.5M182.2 226.5H191.0M186.6 222.1V230.9" fill="none" stroke="#46f59f" stroke-width="0.91"/><path d="M289.3 -15.6H294.3" stroke="#3838c8" stroke-width="1.1"/><path d="M294.3 -21.5V-16.0" stroke="#187018" stroke-width="1"/><path d="M289.3 17.4H294.3" stroke="#3838c8" stroke-width="1.1"/><path d="M294.3 11.5V17.0" stroke="#187018" stroke-width="1"/><path d="M289.3 76.1H294.3" stroke="#3838c8" stroke-width="1.1"/><path d="M294.3 70.2V75.7" stroke="#187018" stroke-width="1"/><path d="M289.3 114.2H294.3" stroke="#3838c8" stroke-width="1.1"/><path d="M294.3 108.3V113.8" stroke="#187018" stroke-width="1"/><path d="M289.1 153.8H294.1" stroke="#3838c8" stroke-width="1.1"/><path d="M294.1 147.9V153.4" stroke="#187018" stroke-width="1"/><path d="M289.1 233.8H294.1" stroke="#3838c8" stroke-width="1.1"/><path d="M294.1 227.9V233.4" stroke="#187018" stroke-width="1"/><path d="M289.3 295.9H294.3" stroke="#3838c8" stroke-width="1.1"/><path d="M294.3 290.0V295.5" stroke="#187018" stroke-width="1"/><path d="M289.3 359.4H294.3" stroke="#3838c8" stroke-width="1.1"/><path d="M294.3 353.5V359.0" stroke="#187018" stroke-width="1"/><path d="M222.6 163.7H230.6" stroke="#1010b0" stroke-width="1.1"/><path d="M226.6 159.4V167.4" stroke="#187018" stroke-width="1"/><rect x="225.6" y="163.1" width="2" height="1" fill="#d02020"/><path d="M203.6 190.6H211.6" stroke="#1010b0" stroke-width="1.1"/><path d="M207.6 186.3V194.3" stroke="#187018" stroke-width="1"/><rect x="206.6" y="190.0" width="2" height="1" fill="#d02020"/><path d="M191.4 212.4H199.4" stroke="#1010b0" stroke-width="1.1"/><path d="M195.4 208.1V216.1" stroke="#187018" stroke-width="1"/><rect x="194.4" y="211.8" width="2" height="1" fill="#d02020"/><path d="M182.6 226.8H190.6" stroke="#1010b0" stroke-width="1.1"/><path d="M186.6 222.5V230.5" stroke="#187018" stroke-width="1"/><rect x="185.6" y="226.2" width="2" height="1" fill="#d02020"/></svg><div class="hud" style="left:15px;top:-1px"><b>顶点</b>:</div><div class="hud" style="left:109px;top:-1px;letter-spacing:0.45px">194</div><div class="hud" style="left:188.4px;top:-1px">0</div><div class="hud" style="left:253px;top:-1px">0</div><div class="hud" style="left:15px;top:19px"><b>边</b>:</div><div class="hud" style="left:109px;top:19px;letter-spacing:0.45px">396</div><div class="hud" style="left:188.4px;top:19px">0</div><div class="hud" style="left:253px;top:19px">0</div><div class="hud" style="left:15px;top:39px"><b>面</b>:</div><div class="hud" style="left:109px;top:39px;letter-spacing:0.45px">204</div><div class="hud" style="left:188.4px;top:39px">0</div><div class="hud" style="left:253px;top:39px">0</div><div class="hud" style="left:15px;top:59px"><b>三角形</b>:</div><div class="hud" style="left:109px;top:59px;letter-spacing:0.45px">384</div><div class="hud" style="left:188.4px;top:59px">0</div><div class="hud" style="left:253px;top:59px">0</div><div class="hud" style="left:15px;top:79px">UV:</div><div class="hud" style="left:109px;top:79px;letter-spacing:0.45px">208</div><div class="hud" style="left:188.4px;top:79px">0</div><div class="hud" style="left:253px;top:79px">0</div></div><div class="a" style="left:598px;top:428px;width:547px;height:369px;border:1px solid #858585;pointer-events:none"></div><div class="a" style="left:411px;top:425px;width:367px;height:1px;background:repeating-linear-gradient(90deg,#777 0 1px,transparent 1px 3px)"></div><div class="a" style="left:595px;top:178px;width:1px;height:122px;background:repeating-linear-gradient(180deg,#777 0 1px,transparent 1px 3px)"></div><div class="a" style="left:595px;top:551px;width:1px;height:122px;background:repeating-linear-gradient(180deg,#777 0 1px,transparent 1px 3px)"></div><div class="a" style="left:1148px;top:52px;width:2px;height:750px;background:#3a3a3a;"></div><div style="position:absolute;white-space:nowrap;color:#c8c8c8;left:1161px;top:61.5px;font-size:12px;line-height:16px">列表</div><div style="position:absolute;white-space:nowrap;color:#c8c8c8;left:1200px;top:61.5px;font-size:12px;line-height:16px">选定</div><div class="a" style="left:1158px;top:96px;width:80px;height:20px;background:#3a3a3a;"></div><div class="a" style="left:1160px;top:98px;width:53px;height:18px;background:#444444;border-radius:3px 3px 0 0"></div><div style="position:absolute;white-space:nowrap;color:#c8c8c8;left:1169.3px;top:100px;font-size:13px;line-height:16px;color:#e4e4e4">joint1</div><div class="a" style="left:1216px;top:98.5px;width:30px;height:17.5px;background:#353535;border-radius:3px 0 0 0"></div><div style="position:absolute;white-space:nowrap;color:#c8c8c8;left:1226px;top:100.5px;font-size:12px;line-height:16px;color:#9a9a9a">c</div><div class="a" style="left:1163px;top:207px;width:80px;height:24px;background:#5d5d5d;border-radius:3px 0 0 3px"></div><svg style="left:1170.7px;top:214px" width="14" height="8"><path d="M0 0h13.4L6.7 7.4z" fill="#eeeeee"/></svg><div style="position:absolute;white-space:nowrap;color:#c8c8c8;left:1200px;top:212.7px;font-size:12px;line-height:16px">变换属性</div><div class="a" style="left:1165px;top:233px;width:80px;height:204px;background:#494949;"></div><div class="a" style="left:1167px;top:406px;width:80px;height:29px;background:#494949;border:1px solid #2b2b2b;border-radius:4px 0 0 4px"></div><svg style="left:1177.5px;top:413px" width="9" height="14"><path d="M0 0v13.2L7.8 6.6z" fill="#eeeeee"/></svg><div style="position:absolute;white-space:nowrap;color:#c8c8c8;left:1201px;top:413.7px;font-size:12px;line-height:16px">偏移父对象矩阵</div><div class="a" style="left:1163px;top:437px;width:80px;height:24px;background:#5d5d5d;border-radius:3px 0 0 3px"></div><svg style="left:1170.7px;top:444px" width="14" height="8"><path d="M0 0h13.4L6.7 7.4z" fill="#eeeeee"/></svg><div style="position:absolute;white-space:nowrap;color:#c8c8c8;left:1200px;top:442.4px;font-size:12px;line-height:16px">关节</div><div class="a" style="left:1165px;top:461px;width:80px;height:177px;background:#494949;"></div><div class="a" style="left:1167px;top:637px;width:80px;height:16px;overflow:hidden"><div class="a" style="left:0px;top:0px;width:80px;height:24px;background:#5d5d5d;border-radius:3px 0 0 3px"></div><svg style="left:8px;top:7px" width="14" height="8"><path d="M0 0h14L7 7.6z" fill="#eeeeee"/></svg><div style="position:absolute;white-space:nowrap;color:#c8c8c8;left:37px;top:5.7px;font-size:12px;line-height:16px">关节标签</div></div><div style="position:absolute;white-space:nowrap;color:#c8c8c8;left:1169.5px;top:664.7px;font-size:12px;line-height:16px;font-weight:bold">注释:</div><div style="position:absolute;white-space:nowrap;color:#c8c8c8;left:1204px;top:664.5px;font-size:12.5px;line-height:16px;font-weight:bold">joint1</div><div class="a" style="left:1157px;top:680px;width:80px;height:84px;background:#2b2b2b;"></div><div class="a" style="left:1154px;top:769px;width:90px;height:26px;background:#5d5d5d;border-radius:2px 0 0 2px"></div><div style="position:absolute;white-space:nowrap;color:#c8c8c8;left:1219px;top:774px;font-size:12px;line-height:16px">选择</div><div class="a" style="left:0px;top:800px;width:1232px;height:2px;background:#3a3a3a;"></div><div class="a" style="left:0px;top:806px;width:1232px;height:74px;background:#2b2b2b;"></div><div class="a" style="left:-11px;top:823px;width:2px;height:57px;background:#8a8a8a;"></div><div class="a" style="left:-9.5px;top:805px;font-size:13px;line-height:16px;letter-spacing:-0.45px;color:#8c8c8c;white-space:nowrap">100</div><div class="a" style="left:38px;top:823px;width:2px;height:57px;background:#8a8a8a;"></div><div class="a" style="left:39.5px;top:805px;font-size:13px;line-height:16px;letter-spacing:-0.45px;color:#8c8c8c;white-space:nowrap">120</div><div class="a" style="left:86px;top:823px;width:2px;height:57px;background:#8a8a8a;"></div><div class="a" style="left:87.5px;top:805px;font-size:13px;line-height:16px;letter-spacing:-0.45px;color:#8c8c8c;white-space:nowrap">140</div><div class="a" style="left:134px;top:823px;width:2px;height:57px;background:#8a8a8a;"></div><div class="a" style="left:135.5px;top:805px;font-size:13px;line-height:16px;letter-spacing:-0.45px;color:#8c8c8c;white-space:nowrap">160</div><div class="a" style="left:183px;top:823px;width:2px;height:57px;background:#8a8a8a;"></div><div class="a" style="left:184.5px;top:805px;font-size:13px;line-height:16px;letter-spacing:-0.45px;color:#8c8c8c;white-space:nowrap">180</div><div class="a" style="left:231px;top:823px;width:2px;height:57px;background:#8a8a8a;"></div><div class="a" style="left:232.5px;top:805px;font-size:13px;line-height:16px;letter-spacing:-0.45px;color:#8c8c8c;white-space:nowrap">200</div><div class="a" style="left:279px;top:823px;width:2px;height:57px;background:#8a8a8a;"></div><div class="a" style="left:280.5px;top:805px;font-size:13px;line-height:16px;letter-spacing:-0.45px;color:#8c8c8c;white-space:nowrap">220</div><div class="a" style="left:328px;top:823px;width:2px;height:57px;background:#8a8a8a;"></div><div class="a" style="left:329.5px;top:805px;font-size:13px;line-height:16px;letter-spacing:-0.45px;color:#8c8c8c;white-space:nowrap">240</div><div class="a" style="left:376px;top:823px;width:2px;height:57px;background:#8a8a8a;"></div><div class="a" style="left:377.5px;top:805px;font-size:13px;line-height:16px;letter-spacing:-0.45px;color:#8c8c8c;white-space:nowrap">260</div><div class="a" style="left:425px;top:823px;width:2px;height:57px;background:#8a8a8a;"></div><div class="a" style="left:426.5px;top:805px;font-size:13px;line-height:16px;letter-spacing:-0.45px;color:#8c8c8c;white-space:nowrap">280</div><div class="a" style="left:473px;top:823px;width:2px;height:57px;background:#8a8a8a;"></div><div class="a" style="left:474.5px;top:805px;font-size:13px;line-height:16px;letter-spacing:-0.45px;color:#8c8c8c;white-space:nowrap">300</div><div class="a" style="left:521px;top:823px;width:2px;height:57px;background:#8a8a8a;"></div><div class="a" style="left:522.5px;top:805px;font-size:13px;line-height:16px;letter-spacing:-0.45px;color:#8c8c8c;white-space:nowrap">320</div><div class="a" style="left:570px;top:823px;width:2px;height:57px;background:#8a8a8a;"></div><div class="a" style="left:571.5px;top:805px;font-size:13px;line-height:16px;letter-spacing:-0.45px;color:#8c8c8c;white-space:nowrap">340</div><div class="a" style="left:618px;top:823px;width:2px;height:57px;background:#8a8a8a;"></div><div class="a" style="left:619.5px;top:805px;font-size:13px;line-height:16px;letter-spacing:-0.45px;color:#8c8c8c;white-space:nowrap">360</div><div class="a" style="left:666px;top:823px;width:2px;height:57px;background:#8a8a8a;"></div><div class="a" style="left:667.5px;top:805px;font-size:13px;line-height:16px;letter-spacing:-0.45px;color:#8c8c8c;white-space:nowrap">380</div><div class="a" style="left:715px;top:823px;width:2px;height:57px;background:#8a8a8a;"></div><div class="a" style="left:716.5px;top:805px;font-size:13px;line-height:16px;letter-spacing:-0.45px;color:#8c8c8c;white-space:nowrap">400</div><div class="a" style="left:763px;top:823px;width:2px;height:57px;background:#8a8a8a;"></div><div class="a" style="left:764.5px;top:805px;font-size:13px;line-height:16px;letter-spacing:-0.45px;color:#8c8c8c;white-space:nowrap">420</div><div class="a" style="left:812px;top:823px;width:2px;height:57px;background:#8a8a8a;"></div><div class="a" style="left:813.5px;top:805px;font-size:13px;line-height:16px;letter-spacing:-0.45px;color:#8c8c8c;white-space:nowrap">440</div><div class="a" style="left:860px;top:823px;width:2px;height:57px;background:#8a8a8a;"></div><div class="a" style="left:861.5px;top:805px;font-size:13px;line-height:16px;letter-spacing:-0.45px;color:#8c8c8c;white-space:nowrap">460</div><div class="a" style="left:908px;top:823px;width:2px;height:57px;background:#8a8a8a;"></div><div class="a" style="left:909.5px;top:805px;font-size:13px;line-height:16px;letter-spacing:-0.45px;color:#8c8c8c;white-space:nowrap">480</div><div class="a" style="left:957px;top:823px;width:2px;height:57px;background:#8a8a8a;"></div><div class="a" style="left:958.5px;top:805px;font-size:13px;line-height:16px;letter-spacing:-0.45px;color:#8c8c8c;white-space:nowrap">500</div><div class="a" style="left:1005px;top:823px;width:2px;height:57px;background:#8a8a8a;"></div><div class="a" style="left:1006.5px;top:805px;font-size:13px;line-height:16px;letter-spacing:-0.45px;color:#8c8c8c;white-space:nowrap">520</div><div class="a" style="left:1053px;top:823px;width:2px;height:57px;background:#8a8a8a;"></div><div class="a" style="left:1054.5px;top:805px;font-size:13px;line-height:16px;letter-spacing:-0.45px;color:#8c8c8c;white-space:nowrap">540</div><div class="a" style="left:1102px;top:823px;width:2px;height:57px;background:#8a8a8a;"></div><div class="a" style="left:1103.5px;top:805px;font-size:13px;line-height:16px;letter-spacing:-0.45px;color:#8c8c8c;white-space:nowrap">560</div><div class="a" style="left:1150px;top:823px;width:2px;height:57px;background:#8a8a8a;"></div><div class="a" style="left:1151.5px;top:805px;font-size:13px;line-height:16px;letter-spacing:-0.45px;color:#8c8c8c;white-space:nowrap">580</div><div class="a" style="left:1199px;top:823px;width:2px;height:57px;background:#8a8a8a;"></div><div class="a" style="left:1200.5px;top:805px;font-size:13px;line-height:16px;letter-spacing:-0.45px;color:#8c8c8c;white-space:nowrap">600</div><div class="a" style="left:1247px;top:823px;width:2px;height:57px;background:#8a8a8a;"></div><div class="a" style="left:1248.5px;top:805px;font-size:13px;line-height:16px;letter-spacing:-0.45px;color:#8c8c8c;white-space:nowrap">620</div><div class="a" style="left:55px;top:806px;width:1px;height:74px;background:#f00000;"></div><div class="a" style="left:152px;top:806px;width:1px;height:74px;background:#f00000;"></div><div class="a" style="left:253px;top:806px;width:1px;height:74px;background:#f00000;"></div><div class="a" style="left:256px;top:806px;width:1px;height:74px;background:#f00000;"></div><div class="a" style="left:280px;top:806px;width:1px;height:74px;background:#f00000;"></div><div class="a" style="left:295px;top:806px;width:1px;height:74px;background:#f00000;"></div><div class="a" style="left:357px;top:806px;width:1px;height:74px;background:#f00000;"></div><div class="a" style="left:384px;top:806px;width:1px;height:74px;background:#f00000;"></div><div class="a" style="left:413px;top:806px;width:1px;height:74px;background:#f00000;"></div><div class="a" style="left:440px;top:806px;width:1px;height:74px;background:#f00000;"></div><div class="a" style="left:461px;top:806px;width:1px;height:74px;background:#f00000;"></div><div class="a" style="left:464px;top:806px;width:1px;height:74px;background:#f00000;"></div><div class="a" style="left:519px;top:806px;width:1px;height:74px;background:#f00000;"></div><div class="a" style="left:539px;top:806px;width:1px;height:74px;background:#f00000;"></div><div class="a" style="left:551px;top:806px;width:1px;height:74px;background:#f00000;"></div><div class="a" style="left:689px;top:806px;width:1px;height:74px;background:#f00000;"></div><div class="a" style="left:735px;top:806px;width:1px;height:74px;background:#f00000;"></div><div class="a" style="left:950px;top:806px;width:1px;height:74px;background:#f00000;"></div><div class="a" style="left:996px;top:806px;width:1px;height:74px;background:#f00000;"></div><div class="a" style="left:1143px;top:806px;width:1px;height:74px;background:#f00000;"></div><div class="a" style="left:1197px;top:806px;width:1px;height:74px;background:#f00000;"></div>
</body></html>
